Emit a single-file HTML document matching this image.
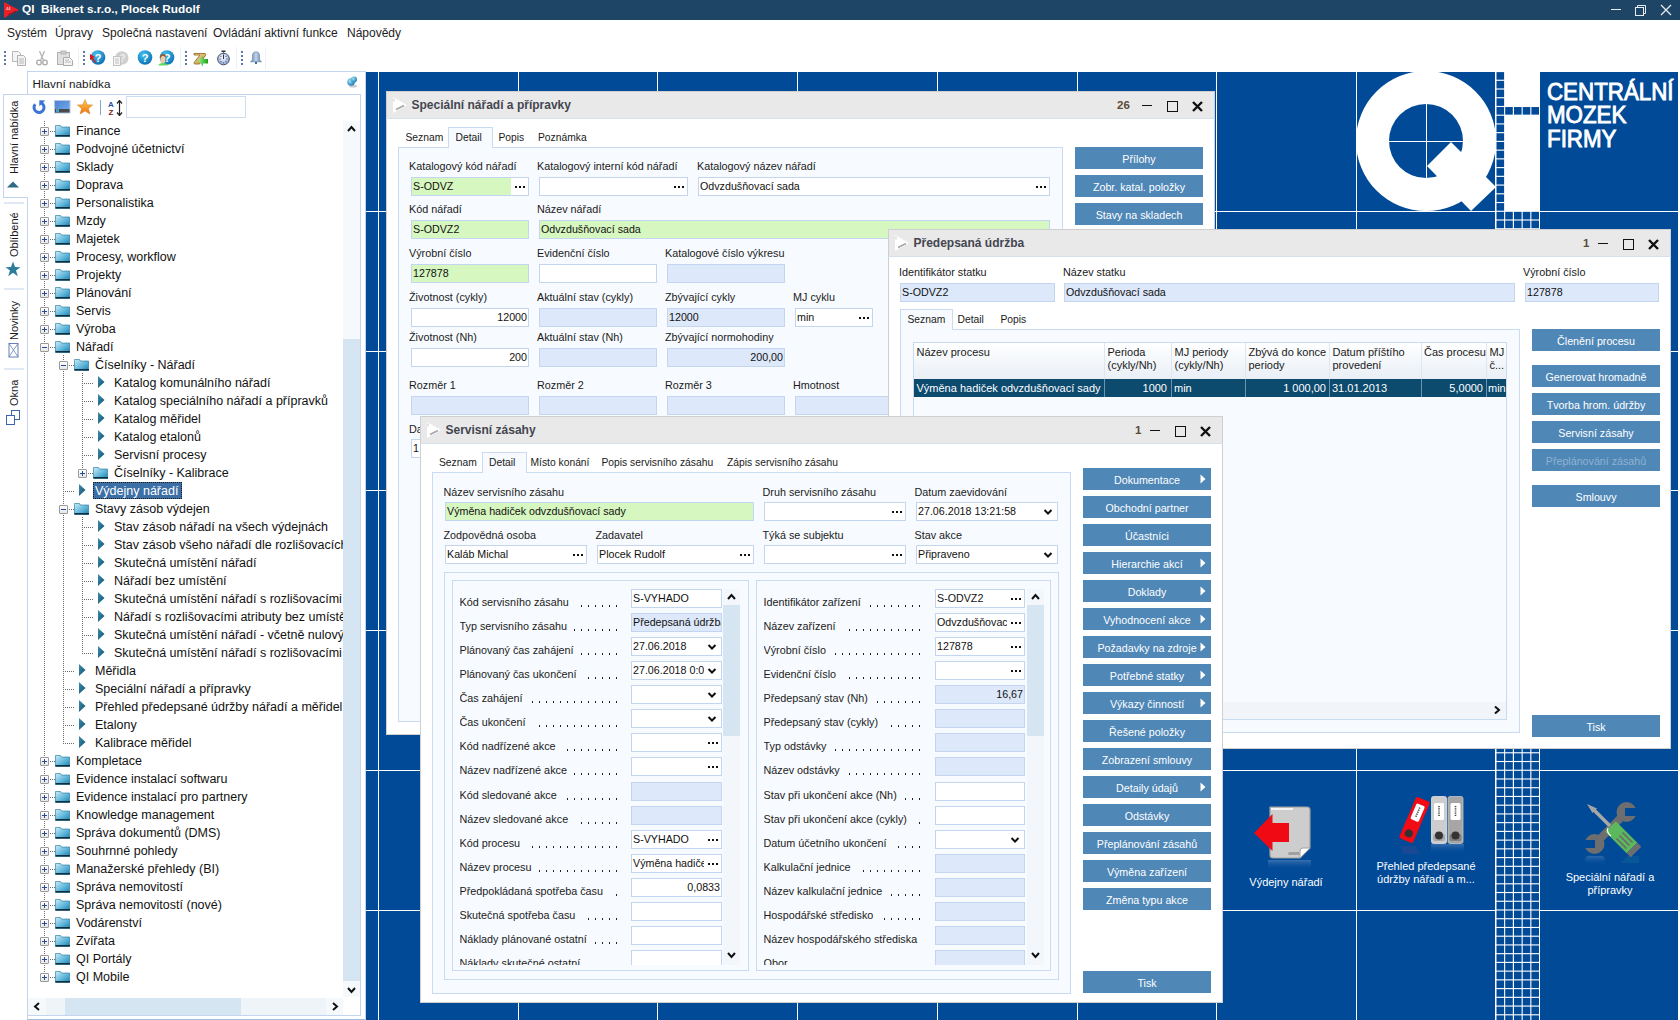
<!DOCTYPE html>
<html><head><meta charset="utf-8"><style>
html,body{margin:0;padding:0}
body{width:1680px;height:1020px;position:relative;overflow:hidden;background:#fff;font-family:"Liberation Sans",sans-serif}
body div{position:absolute;box-sizing:border-box}
.t{white-space:pre;line-height:1}
</style></head><body>
<div style="left:0px;top:0px;width:1680px;height:20px;background:#1e4565"></div>
<svg style="position:absolute;left:2px;top:1px;" width="18" height="18" viewBox="0 0 18 18"><polygon points="2,1 17,9 2,17" fill="#e8202a"/><line x1="6" y1="14" x2="14" y2="10" stroke="#a01018" stroke-width="1.2"/><text x="4" y="9" font-size="4" fill="#fff">44</text></svg>
<div class="t" style="left:22px;top:4.01px;font-size:11.8px;color:#fff;font-weight:700;">QI  Bikenet s.r.o., Plocek Rudolf</div>
<div style="left:1611px;top:9px;width:10px;height:1px;background:#e6ecf2"></div>
<svg style="position:absolute;left:1634px;top:4px;" width="14" height="13" viewBox="0 0 14 13"><rect x="1.5" y="3.5" width="8" height="8" fill="none" stroke="#e6ecf2"/><path d="M3.5 3.5V1.5h8v8h-2" fill="none" stroke="#e6ecf2"/></svg>
<svg style="position:absolute;left:1660px;top:4px;" width="12" height="12" viewBox="0 0 12 12"><path d="M1 1L11 11M11 1L1 11" stroke="#e6ecf2" stroke-width="1.3"/></svg>
<div class="t" style="left:7px;top:26.84px;font-size:12px;color:#1c1c1c;font-weight:400;">Systém</div>
<div class="t" style="left:55px;top:26.84px;font-size:12px;color:#1c1c1c;font-weight:400;">Úpravy</div>
<div class="t" style="left:102px;top:26.84px;font-size:12px;color:#1c1c1c;font-weight:400;">Společná nastavení</div>
<div class="t" style="left:213px;top:26.84px;font-size:12px;color:#1c1c1c;font-weight:400;">Ovládání aktivní funkce</div>
<div class="t" style="left:347px;top:26.84px;font-size:12px;color:#1c1c1c;font-weight:400;">Nápovědy</div>
<div style="left:4px;top:51px;width:2px;height:2px;background:#5a78a8"></div>
<div style="left:4px;top:55px;width:2px;height:2px;background:#5a78a8"></div>
<div style="left:4px;top:59px;width:2px;height:2px;background:#5a78a8"></div>
<div style="left:4px;top:63px;width:2px;height:2px;background:#5a78a8"></div>
<div style="left:83px;top:51px;width:2px;height:2px;background:#5a78a8"></div>
<div style="left:83px;top:55px;width:2px;height:2px;background:#5a78a8"></div>
<div style="left:83px;top:59px;width:2px;height:2px;background:#5a78a8"></div>
<div style="left:83px;top:63px;width:2px;height:2px;background:#5a78a8"></div>
<div style="left:185px;top:51px;width:2px;height:2px;background:#5a78a8"></div>
<div style="left:185px;top:55px;width:2px;height:2px;background:#5a78a8"></div>
<div style="left:185px;top:59px;width:2px;height:2px;background:#5a78a8"></div>
<div style="left:185px;top:63px;width:2px;height:2px;background:#5a78a8"></div>
<div style="left:241px;top:51px;width:2px;height:2px;background:#5a78a8"></div>
<div style="left:241px;top:55px;width:2px;height:2px;background:#5a78a8"></div>
<div style="left:241px;top:59px;width:2px;height:2px;background:#5a78a8"></div>
<div style="left:241px;top:63px;width:2px;height:2px;background:#5a78a8"></div>
<div style="left:78px;top:47px;width:1px;height:22px;background:#edf2f8"></div>
<div style="left:180px;top:47px;width:1px;height:22px;background:#edf2f8"></div>
<div style="left:236px;top:47px;width:1px;height:22px;background:#edf2f8"></div>
<div style="left:265px;top:47px;width:1px;height:22px;background:#edf2f8"></div>
<svg style="position:absolute;left:11px;top:50px;" width="16" height="16" viewBox="0 0 16 16"><path d="M1.5 1.5h6l2 2v8h-8z" fill="#f4f4f4" stroke="#b8b8b8"/><path d="M6.5 5.5h6l2 2v8h-8z" fill="#f4f4f4" stroke="#b0b0b0"/><path d="M8 9h5M8 11h5M8 13h5" stroke="#b8b8b8"/></svg>
<svg style="position:absolute;left:36px;top:50px;" width="12" height="16" viewBox="0 0 12 16"><circle cx="3" cy="12.5" r="2.3" fill="none" stroke="#aaa" stroke-width="1.3"/><circle cx="9" cy="12.5" r="2.3" fill="none" stroke="#aaa" stroke-width="1.3"/><path d="M3.5 1L7.5 10.5M8.5 1L4.5 10.5" stroke="#b5b5b5" stroke-width="1.3"/></svg>
<svg style="position:absolute;left:57px;top:50px;" width="17" height="16" viewBox="0 0 17 16"><rect x="0.5" y="2.5" width="12" height="12" fill="#e0e0e0" stroke="#b0b0b0"/><rect x="4" y="1" width="5" height="3" fill="#d0d0d0" stroke="#aaa" stroke-width=".8"/><path d="M6.5 7.5h6l3 3v5h-9z" fill="#f3f3f3" stroke="#aaa"/><path d="M8 10h4M8 12h6" stroke="#bbb"/></svg>
<svg style="position:absolute;left:89px;top:49px;" width="17" height="17" viewBox="0 0 17 17"><defs><radialGradient id="g89" cx="40%" cy="30%" r="70%"><stop offset="0" stop-color="#4fc6ef"/><stop offset="1" stop-color="#0a6fb2"/></radialGradient></defs><circle cx="9" cy="8.5" r="7.3" fill="url(#g89)"/><text x="9" y="12.6" font-size="11" font-weight="700" fill="#fff" text-anchor="middle" font-family="Liberation Sans">?</text><path d="M1 5l5 3-2 1 3 4-1 1-3-4-2 1z" fill="#e21818"/></svg>
<svg style="position:absolute;left:112px;top:49px;" width="18" height="18" viewBox="0 0 18 18"><circle cx="9.8" cy="9" r="6.8" fill="#cfcfcf"/><text x="10.5" y="13" font-size="10" font-weight="700" fill="#eee" text-anchor="middle" font-family="Liberation Sans">?</text><rect x="1.5" y="7.5" width="7" height="9" fill="#f4f4f4" stroke="#c4c4c4"/><path d="M3 10h4M3 12h4M3 14h4" stroke="#c4c4c4"/></svg>
<svg style="position:absolute;left:136px;top:49px;" width="17" height="17" viewBox="0 0 17 17"><defs><radialGradient id="g136" cx="40%" cy="30%" r="70%"><stop offset="0" stop-color="#45c2f0"/><stop offset="1" stop-color="#0b74b8"/></radialGradient></defs><circle cx="9" cy="8.5" r="7.3" fill="url(#g136)"/><text x="9" y="12.6" font-size="11" font-weight="700" fill="#fff" text-anchor="middle" font-family="Liberation Sans">?</text></svg>
<svg style="position:absolute;left:158px;top:49px;" width="17" height="17" viewBox="0 0 17 17"><defs><radialGradient id="g158" cx="40%" cy="30%" r="70%"><stop offset="0" stop-color="#45c2f0"/><stop offset="1" stop-color="#0b74b8"/></radialGradient></defs><circle cx="9" cy="8.5" r="7.3" fill="url(#g158)"/><text x="9" y="12.6" font-size="11" font-weight="700" fill="#fff" text-anchor="middle" font-family="Liberation Sans">?</text><rect x="2.6" y="7" width="4.6" height="7" rx="1.5" fill="#f2c9a2"/><path d="M2 9q0-4 3-4t3 3l-1 0q-1-1.5-2-1.5t-2 2z" fill="#a0521e"/><path d="M0.5 16.5q0-2.5 4.5-2.5t4.5 2.5z" fill="#5fdc5f"/></svg>
<svg style="position:absolute;left:192px;top:51px;" width="17" height="16" viewBox="0 0 17 16"><defs><linearGradient id="scr" x1="0" y1="0" x2="1" y2="1"><stop offset="0" stop-color="#f4e3a8"/><stop offset="1" stop-color="#b88a30"/></linearGradient><linearGradient id="gar" x1="0" y1="0" x2="1" y2="0"><stop offset="0" stop-color="#9cf08c"/><stop offset="1" stop-color="#18a018"/></linearGradient></defs><path d="M2 2.5h11q1.5 0.5 0.5 2l-6 8.5h-5q-1-0.5 0-2l5.5-7h-6z" fill="url(#scr)" stroke="#9a7128" stroke-width=".9"/><polygon points="6,9.5 11,5 11,8 16,8 16,12.5 11,12.5 11,15.5" fill="url(#gar)"/></svg>
<svg style="position:absolute;left:216px;top:50px;" width="15" height="16" viewBox="0 0 15 16"><defs><radialGradient id="sw" cx="45%" cy="35%" r="70%"><stop offset="0" stop-color="#ffffff"/><stop offset="1" stop-color="#8aa6dc"/></radialGradient></defs><rect x="5.5" y="0.5" width="4" height="1.5" fill="#333"/><path d="M7.5 2v2" stroke="#777"/><circle cx="7.5" cy="9" r="5.8" fill="url(#sw)" stroke="#3c4a66" stroke-width="1"/><path d="M7.5 9V4.5" stroke="#333" stroke-width="1"/><g fill="#4a3a6a"><circle cx="7.5" cy="12.8" r=".6"/><circle cx="4" cy="9" r=".6"/><circle cx="11" cy="9" r=".6"/><circle cx="5" cy="6.3" r=".6"/><circle cx="10" cy="6.3" r=".6"/><circle cx="5" cy="11.7" r=".6"/><circle cx="10" cy="11.7" r=".6"/></g></svg>
<svg style="position:absolute;left:250px;top:51px;" width="12" height="14" viewBox="0 0 12 14"><defs><linearGradient id="bl" x1="0" y1="0" x2="1" y2="0"><stop offset="0" stop-color="#5c7eac"/><stop offset=".5" stop-color="#c3d3e8"/><stop offset="1" stop-color="#5c7eac"/></linearGradient></defs><path d="M6 0.8q-3.6 0-3.6 4.5v3.7l-1.9 1.8h11l-1.9-1.8v-3.7q0-4.5-3.6-4.5z" fill="url(#bl)" stroke="#5a7aa6" stroke-width=".6"/><rect x="5" y="10.8" width="2" height="2.2" fill="#4a6a98"/></svg>
<div style="left:27px;top:197px;width:1px;height:823px;background:#c3d4ee"></div>
<div style="left:3px;top:94px;width:25px;height:104px;background:#fff;border:1px solid #c3d4ee;border-right:none"></div>
<div class="t" style="left:9.19px;top:174px;font-size:11px;color:#1a1a1a;transform-origin:0 0;transform:rotate(-90deg)">Hlavní nabídka</div>
<svg style="position:absolute;left:6px;top:181px;" width="14" height="7" viewBox="0 0 14 7"><polygon points="1,6.5 7,0.5 13,6.5" fill="#2d6b86"/></svg>
<div style="left:4px;top:202px;width:20px;height:2px;background:#dfe8f5"></div>
<div style="left:4px;top:288px;width:20px;height:2px;background:#dfe8f5"></div>
<div style="left:4px;top:368px;width:20px;height:2px;background:#dfe8f5"></div>
<div class="t" style="left:9.19px;top:257px;font-size:11px;color:#1a1a1a;transform-origin:0 0;transform:rotate(-90deg)">Oblíbené</div>
<svg style="position:absolute;left:5px;top:261px;" width="16" height="16" viewBox="0 0 16 16"><polygon points="8,0.5 10,6 15.5,6.2 11,9.6 12.8,15.2 8,11.8 3.2,15.2 5,9.6 0.5,6.2 6,6" fill="#2e7c9c"/></svg>
<div class="t" style="left:9.19px;top:340px;font-size:11px;color:#1a1a1a;transform-origin:0 0;transform:rotate(-90deg)">Novinky</div>
<svg style="position:absolute;left:8px;top:343px;" width="11" height="15" viewBox="0 0 11 15"><rect x="1" y="0.5" width="9" height="13.5" fill="#fff" stroke="#6680b8"/><path d="M1 0.5L5.5 7L10 0.5M1 14L5.5 7L10 14" fill="none" stroke="#6680b8" stroke-width=".8"/></svg>
<div class="t" style="left:9.19px;top:406px;font-size:11px;color:#1a1a1a;transform-origin:0 0;transform:rotate(-90deg)">Okna</div>
<svg style="position:absolute;left:6px;top:410px;" width="14" height="15" viewBox="0 0 14 15"><rect x="5.5" y="0.5" width="8" height="9" fill="#fff" stroke="#3d63b0"/><rect x="0.5" y="5.5" width="8" height="9" fill="#fff" stroke="#3d63b0"/></svg>
<div style="left:27px;top:71px;width:339px;height:24px;background:#fff;border:1px solid #c3d4ee;border-bottom:none"></div>
<div class="t" style="left:32.5px;top:78.10px;font-size:11.7px;color:#1a1a1a;font-weight:400;">Hlavní nabídka</div>
<svg style="position:absolute;left:345px;top:75px;" width="14" height="14" viewBox="0 0 14 14"><defs><radialGradient id="pin" cx="35%" cy="35%" r="70%"><stop offset="0" stop-color="#9fe0f5"/><stop offset="1" stop-color="#1e7db5"/></radialGradient></defs><ellipse cx="8" cy="11" rx="4" ry="1.6" fill="#999" opacity=".5"/><circle cx="6" cy="7" r="3.8" fill="url(#pin)"/><circle cx="9" cy="4.5" r="3" fill="url(#pin)"/></svg>
<div style="left:27px;top:94px;width:334px;height:922px;background:#fff;border:1px solid #c3d4ee"></div>
<div style="left:27px;top:1019px;width:338px;height:1px;background:#9fbfdc"></div>
<div style="left:365px;top:71px;width:1px;height:949px;background:#c3d4ee"></div>
<div style="left:27px;top:95px;width:1px;height:102px;background:#fff"></div>
<svg style="position:absolute;left:32px;top:100px;" width="15" height="15" viewBox="0 0 15 15"><path d="M3.2 4.3A5 5 0 1 0 8 2.6" fill="none" stroke="#3d74d8" stroke-width="3"/><polygon points="7.3,0.2 13.3,0.6 7.3,6.2" fill="#3d74d8"/></svg>
<svg style="position:absolute;left:54px;top:100px;" width="17" height="14" viewBox="0 0 17 14"><defs><linearGradient id="mon" x1="0" y1="0" x2="1" y2="1"><stop offset="0" stop-color="#4e80cf"/><stop offset="1" stop-color="#74aef0"/></linearGradient></defs><rect x="0.5" y="0.5" width="15.5" height="12.5" fill="url(#mon)" stroke="#b7c8de"/><rect x="1" y="9" width="14.5" height="3.5" fill="#4a4a4a"/><rect x="2" y="8.5" width="3" height="3.5" fill="#3aa0e0"/><rect x="2.5" y="9" width="1" height="1" fill="#e44"/><rect x="3.5" y="9" width="1" height="1" fill="#4c4"/></svg>
<svg style="position:absolute;left:77px;top:99px;" width="16" height="16" viewBox="0 0 16 16"><defs><linearGradient id="st" x1="0" y1="0" x2="0" y2="1"><stop offset="0" stop-color="#ffd04a"/><stop offset="1" stop-color="#f07010"/></linearGradient></defs><polygon points="8,0.5 10.2,5.8 15.6,6 11.4,9.5 12.9,15 8,11.9 3.1,15 4.6,9.5 0.4,6 5.8,5.8" fill="url(#st)" stroke="#c87a20" stroke-width=".5"/></svg>
<div style="left:100px;top:100px;width:1px;height:15px;background:#7fa9cf"></div>
<svg style="position:absolute;left:108px;top:100px;" width="15" height="16" viewBox="0 0 15 16"><text x="0" y="7" font-size="8" font-weight="700" fill="#2850a0" font-family="Liberation Sans">A</text><text x="0.5" y="15" font-size="8" font-weight="700" fill="#7a1a1a" font-family="Liberation Sans">Z</text><path d="M11.5 1v14" stroke="#222" stroke-width="1.2"/><path d="M9 3.5l2.5-3 2.5 3M9 12.5l2.5 3 2.5-3" fill="none" stroke="#222" stroke-width="1.2"/></svg>
<div style="left:126px;top:96px;width:120px;height:22px;background:#fff;border:1px solid #cddcf0"></div>
<div style="left:28px;top:120px;width:315px;height:876px;overflow:hidden;">
<div style="left:16px;top:1px;width:1px;height:855px;background:repeating-linear-gradient(to bottom,#6a6a6a 0 1px,transparent 1px 2px)"></div>
<div style="left:35px;top:235px;width:1px;height:388px;background:repeating-linear-gradient(to bottom,#6a6a6a 0 1px,transparent 1px 2px)"></div>
<div style="left:54px;top:253px;width:1px;height:99px;background:repeating-linear-gradient(to bottom,#6a6a6a 0 1px,transparent 1px 2px)"></div>
<div style="left:54px;top:397px;width:1px;height:136px;background:repeating-linear-gradient(to bottom,#6a6a6a 0 1px,transparent 1px 2px)"></div>
<div style="left:20px;top:11px;width:7px;height:1px;background:repeating-linear-gradient(to right,#6a6a6a 0 1px,transparent 1px 2px)"></div>
<div style="left:12px;top:7px;width:9px;height:9px;background:linear-gradient(#fff,#e6e6e6);border:1px solid #9a9a9a;border-radius:1px"></div>
<div style="left:14px;top:11px;width:5px;height:1px;background:#2848a0"></div>
<div style="left:16px;top:9px;width:1px;height:5px;background:#2848a0"></div>
<svg style="position:absolute;left:27px;top:4px;" width="16" height="13" viewBox="0 0 16 13"><defs><linearGradient id="fd" x1="0" y1="0" x2="1" y2="1"><stop offset="0" stop-color="#c9ecf8"/><stop offset=".6" stop-color="#59b2d8"/><stop offset="1" stop-color="#1d7ea8"/></linearGradient></defs><path d="M0.5 1.5h5l1 1.5h8v9.5h-14z" fill="url(#fd)" stroke="#1b6f94" stroke-width=".6"/><rect x="0.5" y="11" width="14.5" height="1.5" fill="#0f2f40"/></svg>
<div class="t" style="left:48px;top:4.72px;font-size:12.5px;color:#111;font-weight:400;">Finance</div>
<div style="left:20px;top:29px;width:7px;height:1px;background:repeating-linear-gradient(to right,#6a6a6a 0 1px,transparent 1px 2px)"></div>
<div style="left:12px;top:25px;width:9px;height:9px;background:linear-gradient(#fff,#e6e6e6);border:1px solid #9a9a9a;border-radius:1px"></div>
<div style="left:14px;top:29px;width:5px;height:1px;background:#2848a0"></div>
<div style="left:16px;top:27px;width:1px;height:5px;background:#2848a0"></div>
<svg style="position:absolute;left:27px;top:22px;" width="16" height="13" viewBox="0 0 16 13"><defs><linearGradient id="fd" x1="0" y1="0" x2="1" y2="1"><stop offset="0" stop-color="#c9ecf8"/><stop offset=".6" stop-color="#59b2d8"/><stop offset="1" stop-color="#1d7ea8"/></linearGradient></defs><path d="M0.5 1.5h5l1 1.5h8v9.5h-14z" fill="url(#fd)" stroke="#1b6f94" stroke-width=".6"/><rect x="0.5" y="11" width="14.5" height="1.5" fill="#0f2f40"/></svg>
<div class="t" style="left:48px;top:22.72px;font-size:12.5px;color:#111;font-weight:400;">Podvojné účetnictví</div>
<div style="left:20px;top:47px;width:7px;height:1px;background:repeating-linear-gradient(to right,#6a6a6a 0 1px,transparent 1px 2px)"></div>
<div style="left:12px;top:43px;width:9px;height:9px;background:linear-gradient(#fff,#e6e6e6);border:1px solid #9a9a9a;border-radius:1px"></div>
<div style="left:14px;top:47px;width:5px;height:1px;background:#2848a0"></div>
<div style="left:16px;top:45px;width:1px;height:5px;background:#2848a0"></div>
<svg style="position:absolute;left:27px;top:40px;" width="16" height="13" viewBox="0 0 16 13"><defs><linearGradient id="fd" x1="0" y1="0" x2="1" y2="1"><stop offset="0" stop-color="#c9ecf8"/><stop offset=".6" stop-color="#59b2d8"/><stop offset="1" stop-color="#1d7ea8"/></linearGradient></defs><path d="M0.5 1.5h5l1 1.5h8v9.5h-14z" fill="url(#fd)" stroke="#1b6f94" stroke-width=".6"/><rect x="0.5" y="11" width="14.5" height="1.5" fill="#0f2f40"/></svg>
<div class="t" style="left:48px;top:40.72px;font-size:12.5px;color:#111;font-weight:400;">Sklady</div>
<div style="left:20px;top:65px;width:7px;height:1px;background:repeating-linear-gradient(to right,#6a6a6a 0 1px,transparent 1px 2px)"></div>
<div style="left:12px;top:61px;width:9px;height:9px;background:linear-gradient(#fff,#e6e6e6);border:1px solid #9a9a9a;border-radius:1px"></div>
<div style="left:14px;top:65px;width:5px;height:1px;background:#2848a0"></div>
<div style="left:16px;top:63px;width:1px;height:5px;background:#2848a0"></div>
<svg style="position:absolute;left:27px;top:58px;" width="16" height="13" viewBox="0 0 16 13"><defs><linearGradient id="fd" x1="0" y1="0" x2="1" y2="1"><stop offset="0" stop-color="#c9ecf8"/><stop offset=".6" stop-color="#59b2d8"/><stop offset="1" stop-color="#1d7ea8"/></linearGradient></defs><path d="M0.5 1.5h5l1 1.5h8v9.5h-14z" fill="url(#fd)" stroke="#1b6f94" stroke-width=".6"/><rect x="0.5" y="11" width="14.5" height="1.5" fill="#0f2f40"/></svg>
<div class="t" style="left:48px;top:58.72px;font-size:12.5px;color:#111;font-weight:400;">Doprava</div>
<div style="left:20px;top:83px;width:7px;height:1px;background:repeating-linear-gradient(to right,#6a6a6a 0 1px,transparent 1px 2px)"></div>
<div style="left:12px;top:79px;width:9px;height:9px;background:linear-gradient(#fff,#e6e6e6);border:1px solid #9a9a9a;border-radius:1px"></div>
<div style="left:14px;top:83px;width:5px;height:1px;background:#2848a0"></div>
<div style="left:16px;top:81px;width:1px;height:5px;background:#2848a0"></div>
<svg style="position:absolute;left:27px;top:76px;" width="16" height="13" viewBox="0 0 16 13"><defs><linearGradient id="fd" x1="0" y1="0" x2="1" y2="1"><stop offset="0" stop-color="#c9ecf8"/><stop offset=".6" stop-color="#59b2d8"/><stop offset="1" stop-color="#1d7ea8"/></linearGradient></defs><path d="M0.5 1.5h5l1 1.5h8v9.5h-14z" fill="url(#fd)" stroke="#1b6f94" stroke-width=".6"/><rect x="0.5" y="11" width="14.5" height="1.5" fill="#0f2f40"/></svg>
<div class="t" style="left:48px;top:76.72px;font-size:12.5px;color:#111;font-weight:400;">Personalistika</div>
<div style="left:20px;top:101px;width:7px;height:1px;background:repeating-linear-gradient(to right,#6a6a6a 0 1px,transparent 1px 2px)"></div>
<div style="left:12px;top:97px;width:9px;height:9px;background:linear-gradient(#fff,#e6e6e6);border:1px solid #9a9a9a;border-radius:1px"></div>
<div style="left:14px;top:101px;width:5px;height:1px;background:#2848a0"></div>
<div style="left:16px;top:99px;width:1px;height:5px;background:#2848a0"></div>
<svg style="position:absolute;left:27px;top:94px;" width="16" height="13" viewBox="0 0 16 13"><defs><linearGradient id="fd" x1="0" y1="0" x2="1" y2="1"><stop offset="0" stop-color="#c9ecf8"/><stop offset=".6" stop-color="#59b2d8"/><stop offset="1" stop-color="#1d7ea8"/></linearGradient></defs><path d="M0.5 1.5h5l1 1.5h8v9.5h-14z" fill="url(#fd)" stroke="#1b6f94" stroke-width=".6"/><rect x="0.5" y="11" width="14.5" height="1.5" fill="#0f2f40"/></svg>
<div class="t" style="left:48px;top:94.72px;font-size:12.5px;color:#111;font-weight:400;">Mzdy</div>
<div style="left:20px;top:119px;width:7px;height:1px;background:repeating-linear-gradient(to right,#6a6a6a 0 1px,transparent 1px 2px)"></div>
<div style="left:12px;top:115px;width:9px;height:9px;background:linear-gradient(#fff,#e6e6e6);border:1px solid #9a9a9a;border-radius:1px"></div>
<div style="left:14px;top:119px;width:5px;height:1px;background:#2848a0"></div>
<div style="left:16px;top:117px;width:1px;height:5px;background:#2848a0"></div>
<svg style="position:absolute;left:27px;top:112px;" width="16" height="13" viewBox="0 0 16 13"><defs><linearGradient id="fd" x1="0" y1="0" x2="1" y2="1"><stop offset="0" stop-color="#c9ecf8"/><stop offset=".6" stop-color="#59b2d8"/><stop offset="1" stop-color="#1d7ea8"/></linearGradient></defs><path d="M0.5 1.5h5l1 1.5h8v9.5h-14z" fill="url(#fd)" stroke="#1b6f94" stroke-width=".6"/><rect x="0.5" y="11" width="14.5" height="1.5" fill="#0f2f40"/></svg>
<div class="t" style="left:48px;top:112.72px;font-size:12.5px;color:#111;font-weight:400;">Majetek</div>
<div style="left:20px;top:137px;width:7px;height:1px;background:repeating-linear-gradient(to right,#6a6a6a 0 1px,transparent 1px 2px)"></div>
<div style="left:12px;top:133px;width:9px;height:9px;background:linear-gradient(#fff,#e6e6e6);border:1px solid #9a9a9a;border-radius:1px"></div>
<div style="left:14px;top:137px;width:5px;height:1px;background:#2848a0"></div>
<div style="left:16px;top:135px;width:1px;height:5px;background:#2848a0"></div>
<svg style="position:absolute;left:27px;top:130px;" width="16" height="13" viewBox="0 0 16 13"><defs><linearGradient id="fd" x1="0" y1="0" x2="1" y2="1"><stop offset="0" stop-color="#c9ecf8"/><stop offset=".6" stop-color="#59b2d8"/><stop offset="1" stop-color="#1d7ea8"/></linearGradient></defs><path d="M0.5 1.5h5l1 1.5h8v9.5h-14z" fill="url(#fd)" stroke="#1b6f94" stroke-width=".6"/><rect x="0.5" y="11" width="14.5" height="1.5" fill="#0f2f40"/></svg>
<div class="t" style="left:48px;top:130.72px;font-size:12.5px;color:#111;font-weight:400;">Procesy, workflow</div>
<div style="left:20px;top:155px;width:7px;height:1px;background:repeating-linear-gradient(to right,#6a6a6a 0 1px,transparent 1px 2px)"></div>
<div style="left:12px;top:151px;width:9px;height:9px;background:linear-gradient(#fff,#e6e6e6);border:1px solid #9a9a9a;border-radius:1px"></div>
<div style="left:14px;top:155px;width:5px;height:1px;background:#2848a0"></div>
<div style="left:16px;top:153px;width:1px;height:5px;background:#2848a0"></div>
<svg style="position:absolute;left:27px;top:148px;" width="16" height="13" viewBox="0 0 16 13"><defs><linearGradient id="fd" x1="0" y1="0" x2="1" y2="1"><stop offset="0" stop-color="#c9ecf8"/><stop offset=".6" stop-color="#59b2d8"/><stop offset="1" stop-color="#1d7ea8"/></linearGradient></defs><path d="M0.5 1.5h5l1 1.5h8v9.5h-14z" fill="url(#fd)" stroke="#1b6f94" stroke-width=".6"/><rect x="0.5" y="11" width="14.5" height="1.5" fill="#0f2f40"/></svg>
<div class="t" style="left:48px;top:148.72px;font-size:12.5px;color:#111;font-weight:400;">Projekty</div>
<div style="left:20px;top:173px;width:7px;height:1px;background:repeating-linear-gradient(to right,#6a6a6a 0 1px,transparent 1px 2px)"></div>
<div style="left:12px;top:169px;width:9px;height:9px;background:linear-gradient(#fff,#e6e6e6);border:1px solid #9a9a9a;border-radius:1px"></div>
<div style="left:14px;top:173px;width:5px;height:1px;background:#2848a0"></div>
<div style="left:16px;top:171px;width:1px;height:5px;background:#2848a0"></div>
<svg style="position:absolute;left:27px;top:166px;" width="16" height="13" viewBox="0 0 16 13"><defs><linearGradient id="fd" x1="0" y1="0" x2="1" y2="1"><stop offset="0" stop-color="#c9ecf8"/><stop offset=".6" stop-color="#59b2d8"/><stop offset="1" stop-color="#1d7ea8"/></linearGradient></defs><path d="M0.5 1.5h5l1 1.5h8v9.5h-14z" fill="url(#fd)" stroke="#1b6f94" stroke-width=".6"/><rect x="0.5" y="11" width="14.5" height="1.5" fill="#0f2f40"/></svg>
<div class="t" style="left:48px;top:166.72px;font-size:12.5px;color:#111;font-weight:400;">Plánování</div>
<div style="left:20px;top:191px;width:7px;height:1px;background:repeating-linear-gradient(to right,#6a6a6a 0 1px,transparent 1px 2px)"></div>
<div style="left:12px;top:187px;width:9px;height:9px;background:linear-gradient(#fff,#e6e6e6);border:1px solid #9a9a9a;border-radius:1px"></div>
<div style="left:14px;top:191px;width:5px;height:1px;background:#2848a0"></div>
<div style="left:16px;top:189px;width:1px;height:5px;background:#2848a0"></div>
<svg style="position:absolute;left:27px;top:184px;" width="16" height="13" viewBox="0 0 16 13"><defs><linearGradient id="fd" x1="0" y1="0" x2="1" y2="1"><stop offset="0" stop-color="#c9ecf8"/><stop offset=".6" stop-color="#59b2d8"/><stop offset="1" stop-color="#1d7ea8"/></linearGradient></defs><path d="M0.5 1.5h5l1 1.5h8v9.5h-14z" fill="url(#fd)" stroke="#1b6f94" stroke-width=".6"/><rect x="0.5" y="11" width="14.5" height="1.5" fill="#0f2f40"/></svg>
<div class="t" style="left:48px;top:184.72px;font-size:12.5px;color:#111;font-weight:400;">Servis</div>
<div style="left:20px;top:209px;width:7px;height:1px;background:repeating-linear-gradient(to right,#6a6a6a 0 1px,transparent 1px 2px)"></div>
<div style="left:12px;top:205px;width:9px;height:9px;background:linear-gradient(#fff,#e6e6e6);border:1px solid #9a9a9a;border-radius:1px"></div>
<div style="left:14px;top:209px;width:5px;height:1px;background:#2848a0"></div>
<div style="left:16px;top:207px;width:1px;height:5px;background:#2848a0"></div>
<svg style="position:absolute;left:27px;top:202px;" width="16" height="13" viewBox="0 0 16 13"><defs><linearGradient id="fd" x1="0" y1="0" x2="1" y2="1"><stop offset="0" stop-color="#c9ecf8"/><stop offset=".6" stop-color="#59b2d8"/><stop offset="1" stop-color="#1d7ea8"/></linearGradient></defs><path d="M0.5 1.5h5l1 1.5h8v9.5h-14z" fill="url(#fd)" stroke="#1b6f94" stroke-width=".6"/><rect x="0.5" y="11" width="14.5" height="1.5" fill="#0f2f40"/></svg>
<div class="t" style="left:48px;top:202.72px;font-size:12.5px;color:#111;font-weight:400;">Výroba</div>
<div style="left:20px;top:227px;width:7px;height:1px;background:repeating-linear-gradient(to right,#6a6a6a 0 1px,transparent 1px 2px)"></div>
<div style="left:12px;top:223px;width:9px;height:9px;background:linear-gradient(#fff,#e6e6e6);border:1px solid #9a9a9a;border-radius:1px"></div>
<div style="left:14px;top:227px;width:5px;height:1px;background:#2848a0"></div>
<svg style="position:absolute;left:27px;top:220px;" width="16" height="13" viewBox="0 0 16 13"><defs><linearGradient id="fd" x1="0" y1="0" x2="1" y2="1"><stop offset="0" stop-color="#c9ecf8"/><stop offset=".6" stop-color="#59b2d8"/><stop offset="1" stop-color="#1d7ea8"/></linearGradient></defs><path d="M0.5 1.5h5l1 1.5h8v9.5h-14z" fill="url(#fd)" stroke="#1b6f94" stroke-width=".6"/><rect x="0.5" y="11" width="14.5" height="1.5" fill="#0f2f40"/></svg>
<div class="t" style="left:48px;top:220.72px;font-size:12.5px;color:#111;font-weight:400;">Nářadí</div>
<div style="left:39px;top:245px;width:7px;height:1px;background:repeating-linear-gradient(to right,#6a6a6a 0 1px,transparent 1px 2px)"></div>
<div style="left:31px;top:241px;width:9px;height:9px;background:linear-gradient(#fff,#e6e6e6);border:1px solid #9a9a9a;border-radius:1px"></div>
<div style="left:33px;top:245px;width:5px;height:1px;background:#2848a0"></div>
<svg style="position:absolute;left:46px;top:238px;" width="16" height="13" viewBox="0 0 16 13"><defs><linearGradient id="fd" x1="0" y1="0" x2="1" y2="1"><stop offset="0" stop-color="#c9ecf8"/><stop offset=".6" stop-color="#59b2d8"/><stop offset="1" stop-color="#1d7ea8"/></linearGradient></defs><path d="M0.5 1.5h5l1 1.5h8v9.5h-14z" fill="url(#fd)" stroke="#1b6f94" stroke-width=".6"/><rect x="0.5" y="11" width="14.5" height="1.5" fill="#0f2f40"/></svg>
<div class="t" style="left:67px;top:238.72px;font-size:12.5px;color:#111;font-weight:400;">Číselníky - Nářadí</div>
<div style="left:54px;top:263px;width:11px;height:1px;background:repeating-linear-gradient(to right,#6a6a6a 0 1px,transparent 1px 2px)"></div>
<svg style="position:absolute;left:70px;top:256px;" width="7" height="12" viewBox="0 0 7 12"><defs><linearGradient id="ag" x1="0" y1="0" x2="1" y2="1"><stop offset="0" stop-color="#3a8fb0"/><stop offset="1" stop-color="#14506a"/></linearGradient></defs><polygon points="0,0 6.5,6 0,12" fill="url(#ag)"/></svg>
<div class="t" style="left:86px;top:256.72px;font-size:12.5px;color:#111;font-weight:400;">Katalog komunálního nářadí</div>
<div style="left:54px;top:281px;width:11px;height:1px;background:repeating-linear-gradient(to right,#6a6a6a 0 1px,transparent 1px 2px)"></div>
<svg style="position:absolute;left:70px;top:274px;" width="7" height="12" viewBox="0 0 7 12"><defs><linearGradient id="ag" x1="0" y1="0" x2="1" y2="1"><stop offset="0" stop-color="#3a8fb0"/><stop offset="1" stop-color="#14506a"/></linearGradient></defs><polygon points="0,0 6.5,6 0,12" fill="url(#ag)"/></svg>
<div class="t" style="left:86px;top:274.72px;font-size:12.5px;color:#111;font-weight:400;">Katalog speciálního nářadí a přípravků</div>
<div style="left:54px;top:299px;width:11px;height:1px;background:repeating-linear-gradient(to right,#6a6a6a 0 1px,transparent 1px 2px)"></div>
<svg style="position:absolute;left:70px;top:292px;" width="7" height="12" viewBox="0 0 7 12"><defs><linearGradient id="ag" x1="0" y1="0" x2="1" y2="1"><stop offset="0" stop-color="#3a8fb0"/><stop offset="1" stop-color="#14506a"/></linearGradient></defs><polygon points="0,0 6.5,6 0,12" fill="url(#ag)"/></svg>
<div class="t" style="left:86px;top:292.72px;font-size:12.5px;color:#111;font-weight:400;">Katalog měřidel</div>
<div style="left:54px;top:317px;width:11px;height:1px;background:repeating-linear-gradient(to right,#6a6a6a 0 1px,transparent 1px 2px)"></div>
<svg style="position:absolute;left:70px;top:310px;" width="7" height="12" viewBox="0 0 7 12"><defs><linearGradient id="ag" x1="0" y1="0" x2="1" y2="1"><stop offset="0" stop-color="#3a8fb0"/><stop offset="1" stop-color="#14506a"/></linearGradient></defs><polygon points="0,0 6.5,6 0,12" fill="url(#ag)"/></svg>
<div class="t" style="left:86px;top:310.72px;font-size:12.5px;color:#111;font-weight:400;">Katalog etalonů</div>
<div style="left:54px;top:335px;width:11px;height:1px;background:repeating-linear-gradient(to right,#6a6a6a 0 1px,transparent 1px 2px)"></div>
<svg style="position:absolute;left:70px;top:328px;" width="7" height="12" viewBox="0 0 7 12"><defs><linearGradient id="ag" x1="0" y1="0" x2="1" y2="1"><stop offset="0" stop-color="#3a8fb0"/><stop offset="1" stop-color="#14506a"/></linearGradient></defs><polygon points="0,0 6.5,6 0,12" fill="url(#ag)"/></svg>
<div class="t" style="left:86px;top:328.72px;font-size:12.5px;color:#111;font-weight:400;">Servisní procesy</div>
<div style="left:58px;top:353px;width:7px;height:1px;background:repeating-linear-gradient(to right,#6a6a6a 0 1px,transparent 1px 2px)"></div>
<div style="left:50px;top:349px;width:9px;height:9px;background:linear-gradient(#fff,#e6e6e6);border:1px solid #9a9a9a;border-radius:1px"></div>
<div style="left:52px;top:353px;width:5px;height:1px;background:#2848a0"></div>
<div style="left:54px;top:351px;width:1px;height:5px;background:#2848a0"></div>
<svg style="position:absolute;left:65px;top:346px;" width="16" height="13" viewBox="0 0 16 13"><defs><linearGradient id="fd" x1="0" y1="0" x2="1" y2="1"><stop offset="0" stop-color="#c9ecf8"/><stop offset=".6" stop-color="#59b2d8"/><stop offset="1" stop-color="#1d7ea8"/></linearGradient></defs><path d="M0.5 1.5h5l1 1.5h8v9.5h-14z" fill="url(#fd)" stroke="#1b6f94" stroke-width=".6"/><rect x="0.5" y="11" width="14.5" height="1.5" fill="#0f2f40"/></svg>
<div class="t" style="left:86px;top:346.72px;font-size:12.5px;color:#111;font-weight:400;">Číselníky - Kalibrace</div>
<div style="left:35px;top:371px;width:11px;height:1px;background:repeating-linear-gradient(to right,#6a6a6a 0 1px,transparent 1px 2px)"></div>
<svg style="position:absolute;left:51px;top:364px;" width="7" height="12" viewBox="0 0 7 12"><defs><linearGradient id="ag" x1="0" y1="0" x2="1" y2="1"><stop offset="0" stop-color="#3a8fb0"/><stop offset="1" stop-color="#14506a"/></linearGradient></defs><polygon points="0,0 6.5,6 0,12" fill="url(#ag)"/></svg>
<div style="left:65px;top:362px;width:89px;height:17px;background:#3b6fa6;border:1px dotted #1a1a1a"></div>
<div class="t" style="left:67px;top:364.72px;font-size:12.5px;color:#fff;font-weight:400;">Výdejny nářadí</div>
<div style="left:39px;top:389px;width:7px;height:1px;background:repeating-linear-gradient(to right,#6a6a6a 0 1px,transparent 1px 2px)"></div>
<div style="left:31px;top:385px;width:9px;height:9px;background:linear-gradient(#fff,#e6e6e6);border:1px solid #9a9a9a;border-radius:1px"></div>
<div style="left:33px;top:389px;width:5px;height:1px;background:#2848a0"></div>
<svg style="position:absolute;left:46px;top:382px;" width="16" height="13" viewBox="0 0 16 13"><defs><linearGradient id="fd" x1="0" y1="0" x2="1" y2="1"><stop offset="0" stop-color="#c9ecf8"/><stop offset=".6" stop-color="#59b2d8"/><stop offset="1" stop-color="#1d7ea8"/></linearGradient></defs><path d="M0.5 1.5h5l1 1.5h8v9.5h-14z" fill="url(#fd)" stroke="#1b6f94" stroke-width=".6"/><rect x="0.5" y="11" width="14.5" height="1.5" fill="#0f2f40"/></svg>
<div class="t" style="left:67px;top:382.72px;font-size:12.5px;color:#111;font-weight:400;">Stavy zásob výdejen</div>
<div style="left:54px;top:407px;width:11px;height:1px;background:repeating-linear-gradient(to right,#6a6a6a 0 1px,transparent 1px 2px)"></div>
<svg style="position:absolute;left:70px;top:400px;" width="7" height="12" viewBox="0 0 7 12"><defs><linearGradient id="ag" x1="0" y1="0" x2="1" y2="1"><stop offset="0" stop-color="#3a8fb0"/><stop offset="1" stop-color="#14506a"/></linearGradient></defs><polygon points="0,0 6.5,6 0,12" fill="url(#ag)"/></svg>
<div class="t" style="left:86px;top:400.72px;font-size:12.5px;color:#111;font-weight:400;">Stav zásob nářadí na všech výdejnách</div>
<div style="left:54px;top:425px;width:11px;height:1px;background:repeating-linear-gradient(to right,#6a6a6a 0 1px,transparent 1px 2px)"></div>
<svg style="position:absolute;left:70px;top:418px;" width="7" height="12" viewBox="0 0 7 12"><defs><linearGradient id="ag" x1="0" y1="0" x2="1" y2="1"><stop offset="0" stop-color="#3a8fb0"/><stop offset="1" stop-color="#14506a"/></linearGradient></defs><polygon points="0,0 6.5,6 0,12" fill="url(#ag)"/></svg>
<div class="t" style="left:86px;top:418.72px;font-size:12.5px;color:#111;font-weight:400;">Stav zásob všeho nářadí dle rozlišovacích atributů</div>
<div style="left:54px;top:443px;width:11px;height:1px;background:repeating-linear-gradient(to right,#6a6a6a 0 1px,transparent 1px 2px)"></div>
<svg style="position:absolute;left:70px;top:436px;" width="7" height="12" viewBox="0 0 7 12"><defs><linearGradient id="ag" x1="0" y1="0" x2="1" y2="1"><stop offset="0" stop-color="#3a8fb0"/><stop offset="1" stop-color="#14506a"/></linearGradient></defs><polygon points="0,0 6.5,6 0,12" fill="url(#ag)"/></svg>
<div class="t" style="left:86px;top:436.72px;font-size:12.5px;color:#111;font-weight:400;">Skutečná umístění nářadí</div>
<div style="left:54px;top:461px;width:11px;height:1px;background:repeating-linear-gradient(to right,#6a6a6a 0 1px,transparent 1px 2px)"></div>
<svg style="position:absolute;left:70px;top:454px;" width="7" height="12" viewBox="0 0 7 12"><defs><linearGradient id="ag" x1="0" y1="0" x2="1" y2="1"><stop offset="0" stop-color="#3a8fb0"/><stop offset="1" stop-color="#14506a"/></linearGradient></defs><polygon points="0,0 6.5,6 0,12" fill="url(#ag)"/></svg>
<div class="t" style="left:86px;top:454.72px;font-size:12.5px;color:#111;font-weight:400;">Nářadí bez umístění</div>
<div style="left:54px;top:479px;width:11px;height:1px;background:repeating-linear-gradient(to right,#6a6a6a 0 1px,transparent 1px 2px)"></div>
<svg style="position:absolute;left:70px;top:472px;" width="7" height="12" viewBox="0 0 7 12"><defs><linearGradient id="ag" x1="0" y1="0" x2="1" y2="1"><stop offset="0" stop-color="#3a8fb0"/><stop offset="1" stop-color="#14506a"/></linearGradient></defs><polygon points="0,0 6.5,6 0,12" fill="url(#ag)"/></svg>
<div class="t" style="left:86px;top:472.72px;font-size:12.5px;color:#111;font-weight:400;">Skutečná umístění nářadí s rozlišovacími atributy</div>
<div style="left:54px;top:497px;width:11px;height:1px;background:repeating-linear-gradient(to right,#6a6a6a 0 1px,transparent 1px 2px)"></div>
<svg style="position:absolute;left:70px;top:490px;" width="7" height="12" viewBox="0 0 7 12"><defs><linearGradient id="ag" x1="0" y1="0" x2="1" y2="1"><stop offset="0" stop-color="#3a8fb0"/><stop offset="1" stop-color="#14506a"/></linearGradient></defs><polygon points="0,0 6.5,6 0,12" fill="url(#ag)"/></svg>
<div class="t" style="left:86px;top:490.72px;font-size:12.5px;color:#111;font-weight:400;">Nářadí s rozlišovacími atributy bez umístění</div>
<div style="left:54px;top:515px;width:11px;height:1px;background:repeating-linear-gradient(to right,#6a6a6a 0 1px,transparent 1px 2px)"></div>
<svg style="position:absolute;left:70px;top:508px;" width="7" height="12" viewBox="0 0 7 12"><defs><linearGradient id="ag" x1="0" y1="0" x2="1" y2="1"><stop offset="0" stop-color="#3a8fb0"/><stop offset="1" stop-color="#14506a"/></linearGradient></defs><polygon points="0,0 6.5,6 0,12" fill="url(#ag)"/></svg>
<div class="t" style="left:86px;top:508.72px;font-size:12.5px;color:#111;font-weight:400;">Skutečná umístění nářadí - včetně nulových</div>
<div style="left:54px;top:533px;width:11px;height:1px;background:repeating-linear-gradient(to right,#6a6a6a 0 1px,transparent 1px 2px)"></div>
<svg style="position:absolute;left:70px;top:526px;" width="7" height="12" viewBox="0 0 7 12"><defs><linearGradient id="ag" x1="0" y1="0" x2="1" y2="1"><stop offset="0" stop-color="#3a8fb0"/><stop offset="1" stop-color="#14506a"/></linearGradient></defs><polygon points="0,0 6.5,6 0,12" fill="url(#ag)"/></svg>
<div class="t" style="left:86px;top:526.72px;font-size:12.5px;color:#111;font-weight:400;">Skutečná umístění nářadí s rozlišovacími atributy</div>
<div style="left:35px;top:551px;width:11px;height:1px;background:repeating-linear-gradient(to right,#6a6a6a 0 1px,transparent 1px 2px)"></div>
<svg style="position:absolute;left:51px;top:544px;" width="7" height="12" viewBox="0 0 7 12"><defs><linearGradient id="ag" x1="0" y1="0" x2="1" y2="1"><stop offset="0" stop-color="#3a8fb0"/><stop offset="1" stop-color="#14506a"/></linearGradient></defs><polygon points="0,0 6.5,6 0,12" fill="url(#ag)"/></svg>
<div class="t" style="left:67px;top:544.72px;font-size:12.5px;color:#111;font-weight:400;">Měřidla</div>
<div style="left:35px;top:569px;width:11px;height:1px;background:repeating-linear-gradient(to right,#6a6a6a 0 1px,transparent 1px 2px)"></div>
<svg style="position:absolute;left:51px;top:562px;" width="7" height="12" viewBox="0 0 7 12"><defs><linearGradient id="ag" x1="0" y1="0" x2="1" y2="1"><stop offset="0" stop-color="#3a8fb0"/><stop offset="1" stop-color="#14506a"/></linearGradient></defs><polygon points="0,0 6.5,6 0,12" fill="url(#ag)"/></svg>
<div class="t" style="left:67px;top:562.72px;font-size:12.5px;color:#111;font-weight:400;">Speciální nářadí a přípravky</div>
<div style="left:35px;top:587px;width:11px;height:1px;background:repeating-linear-gradient(to right,#6a6a6a 0 1px,transparent 1px 2px)"></div>
<svg style="position:absolute;left:51px;top:580px;" width="7" height="12" viewBox="0 0 7 12"><defs><linearGradient id="ag" x1="0" y1="0" x2="1" y2="1"><stop offset="0" stop-color="#3a8fb0"/><stop offset="1" stop-color="#14506a"/></linearGradient></defs><polygon points="0,0 6.5,6 0,12" fill="url(#ag)"/></svg>
<div class="t" style="left:67px;top:580.72px;font-size:12.5px;color:#111;font-weight:400;">Přehled předepsané údržby nářadí a měřidel</div>
<div style="left:35px;top:605px;width:11px;height:1px;background:repeating-linear-gradient(to right,#6a6a6a 0 1px,transparent 1px 2px)"></div>
<svg style="position:absolute;left:51px;top:598px;" width="7" height="12" viewBox="0 0 7 12"><defs><linearGradient id="ag" x1="0" y1="0" x2="1" y2="1"><stop offset="0" stop-color="#3a8fb0"/><stop offset="1" stop-color="#14506a"/></linearGradient></defs><polygon points="0,0 6.5,6 0,12" fill="url(#ag)"/></svg>
<div class="t" style="left:67px;top:598.72px;font-size:12.5px;color:#111;font-weight:400;">Etalony</div>
<div style="left:35px;top:623px;width:11px;height:1px;background:repeating-linear-gradient(to right,#6a6a6a 0 1px,transparent 1px 2px)"></div>
<svg style="position:absolute;left:51px;top:616px;" width="7" height="12" viewBox="0 0 7 12"><defs><linearGradient id="ag" x1="0" y1="0" x2="1" y2="1"><stop offset="0" stop-color="#3a8fb0"/><stop offset="1" stop-color="#14506a"/></linearGradient></defs><polygon points="0,0 6.5,6 0,12" fill="url(#ag)"/></svg>
<div class="t" style="left:67px;top:616.72px;font-size:12.5px;color:#111;font-weight:400;">Kalibrace měřidel</div>
<div style="left:20px;top:641px;width:7px;height:1px;background:repeating-linear-gradient(to right,#6a6a6a 0 1px,transparent 1px 2px)"></div>
<div style="left:12px;top:637px;width:9px;height:9px;background:linear-gradient(#fff,#e6e6e6);border:1px solid #9a9a9a;border-radius:1px"></div>
<div style="left:14px;top:641px;width:5px;height:1px;background:#2848a0"></div>
<div style="left:16px;top:639px;width:1px;height:5px;background:#2848a0"></div>
<svg style="position:absolute;left:27px;top:634px;" width="16" height="13" viewBox="0 0 16 13"><defs><linearGradient id="fd" x1="0" y1="0" x2="1" y2="1"><stop offset="0" stop-color="#c9ecf8"/><stop offset=".6" stop-color="#59b2d8"/><stop offset="1" stop-color="#1d7ea8"/></linearGradient></defs><path d="M0.5 1.5h5l1 1.5h8v9.5h-14z" fill="url(#fd)" stroke="#1b6f94" stroke-width=".6"/><rect x="0.5" y="11" width="14.5" height="1.5" fill="#0f2f40"/></svg>
<div class="t" style="left:48px;top:634.72px;font-size:12.5px;color:#111;font-weight:400;">Kompletace</div>
<div style="left:20px;top:659px;width:7px;height:1px;background:repeating-linear-gradient(to right,#6a6a6a 0 1px,transparent 1px 2px)"></div>
<div style="left:12px;top:655px;width:9px;height:9px;background:linear-gradient(#fff,#e6e6e6);border:1px solid #9a9a9a;border-radius:1px"></div>
<div style="left:14px;top:659px;width:5px;height:1px;background:#2848a0"></div>
<div style="left:16px;top:657px;width:1px;height:5px;background:#2848a0"></div>
<svg style="position:absolute;left:27px;top:652px;" width="16" height="13" viewBox="0 0 16 13"><defs><linearGradient id="fd" x1="0" y1="0" x2="1" y2="1"><stop offset="0" stop-color="#c9ecf8"/><stop offset=".6" stop-color="#59b2d8"/><stop offset="1" stop-color="#1d7ea8"/></linearGradient></defs><path d="M0.5 1.5h5l1 1.5h8v9.5h-14z" fill="url(#fd)" stroke="#1b6f94" stroke-width=".6"/><rect x="0.5" y="11" width="14.5" height="1.5" fill="#0f2f40"/></svg>
<div class="t" style="left:48px;top:652.72px;font-size:12.5px;color:#111;font-weight:400;">Evidence instalací softwaru</div>
<div style="left:20px;top:677px;width:7px;height:1px;background:repeating-linear-gradient(to right,#6a6a6a 0 1px,transparent 1px 2px)"></div>
<div style="left:12px;top:673px;width:9px;height:9px;background:linear-gradient(#fff,#e6e6e6);border:1px solid #9a9a9a;border-radius:1px"></div>
<div style="left:14px;top:677px;width:5px;height:1px;background:#2848a0"></div>
<div style="left:16px;top:675px;width:1px;height:5px;background:#2848a0"></div>
<svg style="position:absolute;left:27px;top:670px;" width="16" height="13" viewBox="0 0 16 13"><defs><linearGradient id="fd" x1="0" y1="0" x2="1" y2="1"><stop offset="0" stop-color="#c9ecf8"/><stop offset=".6" stop-color="#59b2d8"/><stop offset="1" stop-color="#1d7ea8"/></linearGradient></defs><path d="M0.5 1.5h5l1 1.5h8v9.5h-14z" fill="url(#fd)" stroke="#1b6f94" stroke-width=".6"/><rect x="0.5" y="11" width="14.5" height="1.5" fill="#0f2f40"/></svg>
<div class="t" style="left:48px;top:670.72px;font-size:12.5px;color:#111;font-weight:400;">Evidence instalací pro partnery</div>
<div style="left:20px;top:695px;width:7px;height:1px;background:repeating-linear-gradient(to right,#6a6a6a 0 1px,transparent 1px 2px)"></div>
<div style="left:12px;top:691px;width:9px;height:9px;background:linear-gradient(#fff,#e6e6e6);border:1px solid #9a9a9a;border-radius:1px"></div>
<div style="left:14px;top:695px;width:5px;height:1px;background:#2848a0"></div>
<div style="left:16px;top:693px;width:1px;height:5px;background:#2848a0"></div>
<svg style="position:absolute;left:27px;top:688px;" width="16" height="13" viewBox="0 0 16 13"><defs><linearGradient id="fd" x1="0" y1="0" x2="1" y2="1"><stop offset="0" stop-color="#c9ecf8"/><stop offset=".6" stop-color="#59b2d8"/><stop offset="1" stop-color="#1d7ea8"/></linearGradient></defs><path d="M0.5 1.5h5l1 1.5h8v9.5h-14z" fill="url(#fd)" stroke="#1b6f94" stroke-width=".6"/><rect x="0.5" y="11" width="14.5" height="1.5" fill="#0f2f40"/></svg>
<div class="t" style="left:48px;top:688.72px;font-size:12.5px;color:#111;font-weight:400;">Knowledge management</div>
<div style="left:20px;top:713px;width:7px;height:1px;background:repeating-linear-gradient(to right,#6a6a6a 0 1px,transparent 1px 2px)"></div>
<div style="left:12px;top:709px;width:9px;height:9px;background:linear-gradient(#fff,#e6e6e6);border:1px solid #9a9a9a;border-radius:1px"></div>
<div style="left:14px;top:713px;width:5px;height:1px;background:#2848a0"></div>
<div style="left:16px;top:711px;width:1px;height:5px;background:#2848a0"></div>
<svg style="position:absolute;left:27px;top:706px;" width="16" height="13" viewBox="0 0 16 13"><defs><linearGradient id="fd" x1="0" y1="0" x2="1" y2="1"><stop offset="0" stop-color="#c9ecf8"/><stop offset=".6" stop-color="#59b2d8"/><stop offset="1" stop-color="#1d7ea8"/></linearGradient></defs><path d="M0.5 1.5h5l1 1.5h8v9.5h-14z" fill="url(#fd)" stroke="#1b6f94" stroke-width=".6"/><rect x="0.5" y="11" width="14.5" height="1.5" fill="#0f2f40"/></svg>
<div class="t" style="left:48px;top:706.72px;font-size:12.5px;color:#111;font-weight:400;">Správa dokumentů (DMS)</div>
<div style="left:20px;top:731px;width:7px;height:1px;background:repeating-linear-gradient(to right,#6a6a6a 0 1px,transparent 1px 2px)"></div>
<div style="left:12px;top:727px;width:9px;height:9px;background:linear-gradient(#fff,#e6e6e6);border:1px solid #9a9a9a;border-radius:1px"></div>
<div style="left:14px;top:731px;width:5px;height:1px;background:#2848a0"></div>
<div style="left:16px;top:729px;width:1px;height:5px;background:#2848a0"></div>
<svg style="position:absolute;left:27px;top:724px;" width="16" height="13" viewBox="0 0 16 13"><defs><linearGradient id="fd" x1="0" y1="0" x2="1" y2="1"><stop offset="0" stop-color="#c9ecf8"/><stop offset=".6" stop-color="#59b2d8"/><stop offset="1" stop-color="#1d7ea8"/></linearGradient></defs><path d="M0.5 1.5h5l1 1.5h8v9.5h-14z" fill="url(#fd)" stroke="#1b6f94" stroke-width=".6"/><rect x="0.5" y="11" width="14.5" height="1.5" fill="#0f2f40"/></svg>
<div class="t" style="left:48px;top:724.72px;font-size:12.5px;color:#111;font-weight:400;">Souhrnné pohledy</div>
<div style="left:20px;top:749px;width:7px;height:1px;background:repeating-linear-gradient(to right,#6a6a6a 0 1px,transparent 1px 2px)"></div>
<div style="left:12px;top:745px;width:9px;height:9px;background:linear-gradient(#fff,#e6e6e6);border:1px solid #9a9a9a;border-radius:1px"></div>
<div style="left:14px;top:749px;width:5px;height:1px;background:#2848a0"></div>
<div style="left:16px;top:747px;width:1px;height:5px;background:#2848a0"></div>
<svg style="position:absolute;left:27px;top:742px;" width="16" height="13" viewBox="0 0 16 13"><defs><linearGradient id="fd" x1="0" y1="0" x2="1" y2="1"><stop offset="0" stop-color="#c9ecf8"/><stop offset=".6" stop-color="#59b2d8"/><stop offset="1" stop-color="#1d7ea8"/></linearGradient></defs><path d="M0.5 1.5h5l1 1.5h8v9.5h-14z" fill="url(#fd)" stroke="#1b6f94" stroke-width=".6"/><rect x="0.5" y="11" width="14.5" height="1.5" fill="#0f2f40"/></svg>
<div class="t" style="left:48px;top:742.72px;font-size:12.5px;color:#111;font-weight:400;">Manažerské přehledy (BI)</div>
<div style="left:20px;top:767px;width:7px;height:1px;background:repeating-linear-gradient(to right,#6a6a6a 0 1px,transparent 1px 2px)"></div>
<div style="left:12px;top:763px;width:9px;height:9px;background:linear-gradient(#fff,#e6e6e6);border:1px solid #9a9a9a;border-radius:1px"></div>
<div style="left:14px;top:767px;width:5px;height:1px;background:#2848a0"></div>
<div style="left:16px;top:765px;width:1px;height:5px;background:#2848a0"></div>
<svg style="position:absolute;left:27px;top:760px;" width="16" height="13" viewBox="0 0 16 13"><defs><linearGradient id="fd" x1="0" y1="0" x2="1" y2="1"><stop offset="0" stop-color="#c9ecf8"/><stop offset=".6" stop-color="#59b2d8"/><stop offset="1" stop-color="#1d7ea8"/></linearGradient></defs><path d="M0.5 1.5h5l1 1.5h8v9.5h-14z" fill="url(#fd)" stroke="#1b6f94" stroke-width=".6"/><rect x="0.5" y="11" width="14.5" height="1.5" fill="#0f2f40"/></svg>
<div class="t" style="left:48px;top:760.72px;font-size:12.5px;color:#111;font-weight:400;">Správa nemovitostí</div>
<div style="left:20px;top:785px;width:7px;height:1px;background:repeating-linear-gradient(to right,#6a6a6a 0 1px,transparent 1px 2px)"></div>
<div style="left:12px;top:781px;width:9px;height:9px;background:linear-gradient(#fff,#e6e6e6);border:1px solid #9a9a9a;border-radius:1px"></div>
<div style="left:14px;top:785px;width:5px;height:1px;background:#2848a0"></div>
<div style="left:16px;top:783px;width:1px;height:5px;background:#2848a0"></div>
<svg style="position:absolute;left:27px;top:778px;" width="16" height="13" viewBox="0 0 16 13"><defs><linearGradient id="fd" x1="0" y1="0" x2="1" y2="1"><stop offset="0" stop-color="#c9ecf8"/><stop offset=".6" stop-color="#59b2d8"/><stop offset="1" stop-color="#1d7ea8"/></linearGradient></defs><path d="M0.5 1.5h5l1 1.5h8v9.5h-14z" fill="url(#fd)" stroke="#1b6f94" stroke-width=".6"/><rect x="0.5" y="11" width="14.5" height="1.5" fill="#0f2f40"/></svg>
<div class="t" style="left:48px;top:778.72px;font-size:12.5px;color:#111;font-weight:400;">Správa nemovitostí (nové)</div>
<div style="left:20px;top:803px;width:7px;height:1px;background:repeating-linear-gradient(to right,#6a6a6a 0 1px,transparent 1px 2px)"></div>
<div style="left:12px;top:799px;width:9px;height:9px;background:linear-gradient(#fff,#e6e6e6);border:1px solid #9a9a9a;border-radius:1px"></div>
<div style="left:14px;top:803px;width:5px;height:1px;background:#2848a0"></div>
<div style="left:16px;top:801px;width:1px;height:5px;background:#2848a0"></div>
<svg style="position:absolute;left:27px;top:796px;" width="16" height="13" viewBox="0 0 16 13"><defs><linearGradient id="fd" x1="0" y1="0" x2="1" y2="1"><stop offset="0" stop-color="#c9ecf8"/><stop offset=".6" stop-color="#59b2d8"/><stop offset="1" stop-color="#1d7ea8"/></linearGradient></defs><path d="M0.5 1.5h5l1 1.5h8v9.5h-14z" fill="url(#fd)" stroke="#1b6f94" stroke-width=".6"/><rect x="0.5" y="11" width="14.5" height="1.5" fill="#0f2f40"/></svg>
<div class="t" style="left:48px;top:796.72px;font-size:12.5px;color:#111;font-weight:400;">Vodárenství</div>
<div style="left:20px;top:821px;width:7px;height:1px;background:repeating-linear-gradient(to right,#6a6a6a 0 1px,transparent 1px 2px)"></div>
<div style="left:12px;top:817px;width:9px;height:9px;background:linear-gradient(#fff,#e6e6e6);border:1px solid #9a9a9a;border-radius:1px"></div>
<div style="left:14px;top:821px;width:5px;height:1px;background:#2848a0"></div>
<div style="left:16px;top:819px;width:1px;height:5px;background:#2848a0"></div>
<svg style="position:absolute;left:27px;top:814px;" width="16" height="13" viewBox="0 0 16 13"><defs><linearGradient id="fd" x1="0" y1="0" x2="1" y2="1"><stop offset="0" stop-color="#c9ecf8"/><stop offset=".6" stop-color="#59b2d8"/><stop offset="1" stop-color="#1d7ea8"/></linearGradient></defs><path d="M0.5 1.5h5l1 1.5h8v9.5h-14z" fill="url(#fd)" stroke="#1b6f94" stroke-width=".6"/><rect x="0.5" y="11" width="14.5" height="1.5" fill="#0f2f40"/></svg>
<div class="t" style="left:48px;top:814.72px;font-size:12.5px;color:#111;font-weight:400;">Zvířata</div>
<div style="left:20px;top:839px;width:7px;height:1px;background:repeating-linear-gradient(to right,#6a6a6a 0 1px,transparent 1px 2px)"></div>
<div style="left:12px;top:835px;width:9px;height:9px;background:linear-gradient(#fff,#e6e6e6);border:1px solid #9a9a9a;border-radius:1px"></div>
<div style="left:14px;top:839px;width:5px;height:1px;background:#2848a0"></div>
<div style="left:16px;top:837px;width:1px;height:5px;background:#2848a0"></div>
<svg style="position:absolute;left:27px;top:832px;" width="16" height="13" viewBox="0 0 16 13"><defs><linearGradient id="fd" x1="0" y1="0" x2="1" y2="1"><stop offset="0" stop-color="#c9ecf8"/><stop offset=".6" stop-color="#59b2d8"/><stop offset="1" stop-color="#1d7ea8"/></linearGradient></defs><path d="M0.5 1.5h5l1 1.5h8v9.5h-14z" fill="url(#fd)" stroke="#1b6f94" stroke-width=".6"/><rect x="0.5" y="11" width="14.5" height="1.5" fill="#0f2f40"/></svg>
<div class="t" style="left:48px;top:832.72px;font-size:12.5px;color:#111;font-weight:400;">QI Portály</div>
<div style="left:20px;top:857px;width:7px;height:1px;background:repeating-linear-gradient(to right,#6a6a6a 0 1px,transparent 1px 2px)"></div>
<div style="left:12px;top:853px;width:9px;height:9px;background:linear-gradient(#fff,#e6e6e6);border:1px solid #9a9a9a;border-radius:1px"></div>
<div style="left:14px;top:857px;width:5px;height:1px;background:#2848a0"></div>
<div style="left:16px;top:855px;width:1px;height:5px;background:#2848a0"></div>
<svg style="position:absolute;left:27px;top:850px;" width="16" height="13" viewBox="0 0 16 13"><defs><linearGradient id="fd" x1="0" y1="0" x2="1" y2="1"><stop offset="0" stop-color="#c9ecf8"/><stop offset=".6" stop-color="#59b2d8"/><stop offset="1" stop-color="#1d7ea8"/></linearGradient></defs><path d="M0.5 1.5h5l1 1.5h8v9.5h-14z" fill="url(#fd)" stroke="#1b6f94" stroke-width=".6"/><rect x="0.5" y="11" width="14.5" height="1.5" fill="#0f2f40"/></svg>
<div class="t" style="left:48px;top:850.72px;font-size:12.5px;color:#111;font-weight:400;">QI Mobile</div>
</div>
<div style="left:343px;top:121px;width:17px;height:876px;background:#f6f9fc"></div>
<div style="left:343px;top:339px;width:17px;height:642px;background:#d6e5f2"></div>
<svg style="position:absolute;left:347px;top:125px;" width="9" height="7" viewBox="0 0 9 7"><path d="M1 6L4.5 2L8 6" fill="none" stroke="#111" stroke-width="2"/></svg>
<svg style="position:absolute;left:347px;top:987px;" width="9" height="7" viewBox="0 0 9 7"><path d="M1 1L4.5 5L8 1" fill="none" stroke="#111" stroke-width="2"/></svg>
<div style="left:28px;top:998px;width:315px;height:17px;background:#f6f9fc"></div>
<div style="left:46px;top:998px;width:280px;height:17px;background:#eef4f8"></div>
<div style="left:65px;top:998px;width:176px;height:17px;background:#d6e5f2"></div>
<svg style="position:absolute;left:33px;top:1002px;" width="8" height="9" viewBox="0 0 8 9"><path d="M6 1L2 4.5L6 8" fill="none" stroke="#111" stroke-width="2"/></svg>
<svg style="position:absolute;left:331px;top:1002px;" width="8" height="9" viewBox="0 0 8 9"><path d="M2 1L6 4.5L2 8" fill="none" stroke="#111" stroke-width="2"/></svg>
<svg style="position:absolute;left:366px;top:72px;shape-rendering:auto" width="1314" height="948" viewBox="0 0 1314 948"><rect x="0" y="0" width="1314" height="948" fill="#004a97"/><rect x="12" y="0" width="1" height="948" fill="#fff"/><rect x="152" y="0" width="1" height="948" fill="#fff"/><rect x="291" y="0" width="1" height="948" fill="#fff"/><rect x="431" y="0" width="1" height="948" fill="#fff"/><rect x="571" y="0" width="1" height="948" fill="#fff"/><rect x="711" y="0" width="1" height="948" fill="#fff"/><rect x="850" y="0" width="1" height="948" fill="#fff"/><rect x="990" y="0" width="1" height="948" fill="#fff"/><rect x="0" y="139" width="1129" height="1" fill="#fff"/><rect x="1174" y="139" width="140" height="1" fill="#fff"/><rect x="0" y="279" width="1129" height="1" fill="#fff"/><rect x="1174" y="279" width="140" height="1" fill="#fff"/><rect x="0" y="418" width="1129" height="1" fill="#fff"/><rect x="1174" y="418" width="140" height="1" fill="#fff"/><rect x="0" y="558" width="1129" height="1" fill="#fff"/><rect x="1174" y="558" width="140" height="1" fill="#fff"/><rect x="0" y="698" width="1129" height="1" fill="#fff"/><rect x="1174" y="698" width="140" height="1" fill="#fff"/><rect x="0" y="838" width="1129" height="1" fill="#fff"/><rect x="1174" y="838" width="140" height="1" fill="#fff"/><rect x="1129" y="0" width="45" height="948" fill="#fff"/><rect x="1130.50" y="0.10" width="7.6" height="7.6" fill="#004a97"/><rect x="1130.50" y="8.83" width="7.6" height="7.6" fill="#004a97"/><rect x="1130.50" y="17.57" width="7.6" height="7.6" fill="#004a97"/><rect x="1130.50" y="26.30" width="7.6" height="7.6" fill="#004a97"/><rect x="1130.50" y="35.04" width="7.6" height="7.6" fill="#004a97"/><rect x="1139.20" y="35.04" width="7.6" height="7.6" fill="#004a97"/><rect x="1148.00" y="35.04" width="7.6" height="7.6" fill="#004a97"/><rect x="1156.70" y="35.04" width="7.6" height="7.6" fill="#004a97"/><rect x="1165.40" y="35.04" width="7.6" height="7.6" fill="#004a97"/><rect x="1130.50" y="43.77" width="7.6" height="7.6" fill="#004a97"/><rect x="1130.50" y="52.50" width="7.6" height="7.6" fill="#004a97"/><rect x="1130.50" y="61.24" width="7.6" height="7.6" fill="#004a97"/><rect x="1130.50" y="69.97" width="7.6" height="7.6" fill="#004a97"/><rect x="1130.50" y="78.71" width="7.6" height="7.6" fill="#004a97"/><rect x="1130.50" y="87.44" width="7.6" height="7.6" fill="#004a97"/><rect x="1130.50" y="96.17" width="7.6" height="7.6" fill="#004a97"/><rect x="1130.50" y="104.91" width="7.6" height="7.6" fill="#004a97"/><rect x="1130.50" y="113.64" width="7.6" height="7.6" fill="#004a97"/><rect x="1130.50" y="122.38" width="7.6" height="7.6" fill="#004a97"/><rect x="1130.50" y="131.11" width="7.6" height="7.6" fill="#004a97"/><rect x="1130.50" y="139.84" width="7.6" height="7.6" fill="#004a97"/><rect x="1139.20" y="139.84" width="7.6" height="7.6" fill="#004a97"/><rect x="1148.00" y="139.84" width="7.6" height="7.6" fill="#004a97"/><rect x="1156.70" y="139.84" width="7.6" height="7.6" fill="#004a97"/><rect x="1165.40" y="139.84" width="7.6" height="7.6" fill="#004a97"/><rect x="1130.50" y="148.58" width="7.6" height="7.6" fill="#004a97"/><rect x="1139.20" y="148.58" width="7.6" height="7.6" fill="#004a97"/><rect x="1148.00" y="148.58" width="7.6" height="7.6" fill="#004a97"/><rect x="1156.70" y="148.58" width="7.6" height="7.6" fill="#004a97"/><rect x="1165.40" y="148.58" width="7.6" height="7.6" fill="#004a97"/><rect x="1130.50" y="157.31" width="7.6" height="7.6" fill="#004a97"/><rect x="1139.20" y="157.31" width="7.6" height="7.6" fill="#004a97"/><rect x="1148.00" y="157.31" width="7.6" height="7.6" fill="#004a97"/><rect x="1156.70" y="157.31" width="7.6" height="7.6" fill="#004a97"/><rect x="1165.40" y="157.31" width="7.6" height="7.6" fill="#004a97"/><rect x="1130.50" y="166.05" width="7.6" height="7.6" fill="#004a97"/><rect x="1139.20" y="166.05" width="7.6" height="7.6" fill="#004a97"/><rect x="1148.00" y="166.05" width="7.6" height="7.6" fill="#004a97"/><rect x="1156.70" y="166.05" width="7.6" height="7.6" fill="#004a97"/><rect x="1165.40" y="166.05" width="7.6" height="7.6" fill="#004a97"/><rect x="1130.50" y="174.78" width="7.6" height="7.6" fill="#004a97"/><rect x="1139.20" y="174.78" width="7.6" height="7.6" fill="#004a97"/><rect x="1148.00" y="174.78" width="7.6" height="7.6" fill="#004a97"/><rect x="1156.70" y="174.78" width="7.6" height="7.6" fill="#004a97"/><rect x="1165.40" y="174.78" width="7.6" height="7.6" fill="#004a97"/><rect x="1130.50" y="183.51" width="7.6" height="7.6" fill="#004a97"/><rect x="1139.20" y="183.51" width="7.6" height="7.6" fill="#004a97"/><rect x="1148.00" y="183.51" width="7.6" height="7.6" fill="#004a97"/><rect x="1156.70" y="183.51" width="7.6" height="7.6" fill="#004a97"/><rect x="1165.40" y="183.51" width="7.6" height="7.6" fill="#004a97"/><rect x="1130.50" y="192.25" width="7.6" height="7.6" fill="#004a97"/><rect x="1139.20" y="192.25" width="7.6" height="7.6" fill="#004a97"/><rect x="1148.00" y="192.25" width="7.6" height="7.6" fill="#004a97"/><rect x="1156.70" y="192.25" width="7.6" height="7.6" fill="#004a97"/><rect x="1165.40" y="192.25" width="7.6" height="7.6" fill="#004a97"/><rect x="1130.50" y="200.98" width="7.6" height="7.6" fill="#004a97"/><rect x="1139.20" y="200.98" width="7.6" height="7.6" fill="#004a97"/><rect x="1148.00" y="200.98" width="7.6" height="7.6" fill="#004a97"/><rect x="1156.70" y="200.98" width="7.6" height="7.6" fill="#004a97"/><rect x="1165.40" y="200.98" width="7.6" height="7.6" fill="#004a97"/><rect x="1130.50" y="209.72" width="7.6" height="7.6" fill="#004a97"/><rect x="1139.20" y="209.72" width="7.6" height="7.6" fill="#004a97"/><rect x="1148.00" y="209.72" width="7.6" height="7.6" fill="#004a97"/><rect x="1156.70" y="209.72" width="7.6" height="7.6" fill="#004a97"/><rect x="1165.40" y="209.72" width="7.6" height="7.6" fill="#004a97"/><rect x="1130.50" y="218.45" width="7.6" height="7.6" fill="#004a97"/><rect x="1139.20" y="218.45" width="7.6" height="7.6" fill="#004a97"/><rect x="1148.00" y="218.45" width="7.6" height="7.6" fill="#004a97"/><rect x="1156.70" y="218.45" width="7.6" height="7.6" fill="#004a97"/><rect x="1165.40" y="218.45" width="7.6" height="7.6" fill="#004a97"/><rect x="1130.50" y="227.18" width="7.6" height="7.6" fill="#004a97"/><rect x="1139.20" y="227.18" width="7.6" height="7.6" fill="#004a97"/><rect x="1148.00" y="227.18" width="7.6" height="7.6" fill="#004a97"/><rect x="1156.70" y="227.18" width="7.6" height="7.6" fill="#004a97"/><rect x="1165.40" y="227.18" width="7.6" height="7.6" fill="#004a97"/><rect x="1130.50" y="235.92" width="7.6" height="7.6" fill="#004a97"/><rect x="1139.20" y="235.92" width="7.6" height="7.6" fill="#004a97"/><rect x="1148.00" y="235.92" width="7.6" height="7.6" fill="#004a97"/><rect x="1156.70" y="235.92" width="7.6" height="7.6" fill="#004a97"/><rect x="1165.40" y="235.92" width="7.6" height="7.6" fill="#004a97"/><rect x="1130.50" y="244.65" width="7.6" height="7.6" fill="#004a97"/><rect x="1139.20" y="244.65" width="7.6" height="7.6" fill="#004a97"/><rect x="1148.00" y="244.65" width="7.6" height="7.6" fill="#004a97"/><rect x="1156.70" y="244.65" width="7.6" height="7.6" fill="#004a97"/><rect x="1165.40" y="244.65" width="7.6" height="7.6" fill="#004a97"/><rect x="1130.50" y="253.39" width="7.6" height="7.6" fill="#004a97"/><rect x="1139.20" y="253.39" width="7.6" height="7.6" fill="#004a97"/><rect x="1148.00" y="253.39" width="7.6" height="7.6" fill="#004a97"/><rect x="1156.70" y="253.39" width="7.6" height="7.6" fill="#004a97"/><rect x="1165.40" y="253.39" width="7.6" height="7.6" fill="#004a97"/><rect x="1130.50" y="262.12" width="7.6" height="7.6" fill="#004a97"/><rect x="1139.20" y="262.12" width="7.6" height="7.6" fill="#004a97"/><rect x="1148.00" y="262.12" width="7.6" height="7.6" fill="#004a97"/><rect x="1156.70" y="262.12" width="7.6" height="7.6" fill="#004a97"/><rect x="1165.40" y="262.12" width="7.6" height="7.6" fill="#004a97"/><rect x="1130.50" y="270.85" width="7.6" height="7.6" fill="#004a97"/><rect x="1139.20" y="270.85" width="7.6" height="7.6" fill="#004a97"/><rect x="1148.00" y="270.85" width="7.6" height="7.6" fill="#004a97"/><rect x="1156.70" y="270.85" width="7.6" height="7.6" fill="#004a97"/><rect x="1165.40" y="270.85" width="7.6" height="7.6" fill="#004a97"/><rect x="1130.50" y="279.59" width="7.6" height="7.6" fill="#004a97"/><rect x="1139.20" y="279.59" width="7.6" height="7.6" fill="#004a97"/><rect x="1148.00" y="279.59" width="7.6" height="7.6" fill="#004a97"/><rect x="1156.70" y="279.59" width="7.6" height="7.6" fill="#004a97"/><rect x="1165.40" y="279.59" width="7.6" height="7.6" fill="#004a97"/><rect x="1130.50" y="288.32" width="7.6" height="7.6" fill="#004a97"/><rect x="1139.20" y="288.32" width="7.6" height="7.6" fill="#004a97"/><rect x="1148.00" y="288.32" width="7.6" height="7.6" fill="#004a97"/><rect x="1156.70" y="288.32" width="7.6" height="7.6" fill="#004a97"/><rect x="1165.40" y="288.32" width="7.6" height="7.6" fill="#004a97"/><rect x="1130.50" y="297.06" width="7.6" height="7.6" fill="#004a97"/><rect x="1139.20" y="297.06" width="7.6" height="7.6" fill="#004a97"/><rect x="1148.00" y="297.06" width="7.6" height="7.6" fill="#004a97"/><rect x="1156.70" y="297.06" width="7.6" height="7.6" fill="#004a97"/><rect x="1165.40" y="297.06" width="7.6" height="7.6" fill="#004a97"/><rect x="1130.50" y="305.79" width="7.6" height="7.6" fill="#004a97"/><rect x="1139.20" y="305.79" width="7.6" height="7.6" fill="#004a97"/><rect x="1148.00" y="305.79" width="7.6" height="7.6" fill="#004a97"/><rect x="1156.70" y="305.79" width="7.6" height="7.6" fill="#004a97"/><rect x="1165.40" y="305.79" width="7.6" height="7.6" fill="#004a97"/><rect x="1130.50" y="314.52" width="7.6" height="7.6" fill="#004a97"/><rect x="1139.20" y="314.52" width="7.6" height="7.6" fill="#004a97"/><rect x="1148.00" y="314.52" width="7.6" height="7.6" fill="#004a97"/><rect x="1156.70" y="314.52" width="7.6" height="7.6" fill="#004a97"/><rect x="1165.40" y="314.52" width="7.6" height="7.6" fill="#004a97"/><rect x="1130.50" y="323.26" width="7.6" height="7.6" fill="#004a97"/><rect x="1139.20" y="323.26" width="7.6" height="7.6" fill="#004a97"/><rect x="1148.00" y="323.26" width="7.6" height="7.6" fill="#004a97"/><rect x="1156.70" y="323.26" width="7.6" height="7.6" fill="#004a97"/><rect x="1165.40" y="323.26" width="7.6" height="7.6" fill="#004a97"/><rect x="1130.50" y="331.99" width="7.6" height="7.6" fill="#004a97"/><rect x="1139.20" y="331.99" width="7.6" height="7.6" fill="#004a97"/><rect x="1148.00" y="331.99" width="7.6" height="7.6" fill="#004a97"/><rect x="1156.70" y="331.99" width="7.6" height="7.6" fill="#004a97"/><rect x="1165.40" y="331.99" width="7.6" height="7.6" fill="#004a97"/><rect x="1130.50" y="340.73" width="7.6" height="7.6" fill="#004a97"/><rect x="1139.20" y="340.73" width="7.6" height="7.6" fill="#004a97"/><rect x="1148.00" y="340.73" width="7.6" height="7.6" fill="#004a97"/><rect x="1156.70" y="340.73" width="7.6" height="7.6" fill="#004a97"/><rect x="1165.40" y="340.73" width="7.6" height="7.6" fill="#004a97"/><rect x="1130.50" y="349.46" width="7.6" height="7.6" fill="#004a97"/><rect x="1139.20" y="349.46" width="7.6" height="7.6" fill="#004a97"/><rect x="1148.00" y="349.46" width="7.6" height="7.6" fill="#004a97"/><rect x="1156.70" y="349.46" width="7.6" height="7.6" fill="#004a97"/><rect x="1165.40" y="349.46" width="7.6" height="7.6" fill="#004a97"/><rect x="1130.50" y="358.19" width="7.6" height="7.6" fill="#004a97"/><rect x="1139.20" y="358.19" width="7.6" height="7.6" fill="#004a97"/><rect x="1148.00" y="358.19" width="7.6" height="7.6" fill="#004a97"/><rect x="1156.70" y="358.19" width="7.6" height="7.6" fill="#004a97"/><rect x="1165.40" y="358.19" width="7.6" height="7.6" fill="#004a97"/><rect x="1130.50" y="366.93" width="7.6" height="7.6" fill="#004a97"/><rect x="1139.20" y="366.93" width="7.6" height="7.6" fill="#004a97"/><rect x="1148.00" y="366.93" width="7.6" height="7.6" fill="#004a97"/><rect x="1156.70" y="366.93" width="7.6" height="7.6" fill="#004a97"/><rect x="1165.40" y="366.93" width="7.6" height="7.6" fill="#004a97"/><rect x="1130.50" y="375.66" width="7.6" height="7.6" fill="#004a97"/><rect x="1139.20" y="375.66" width="7.6" height="7.6" fill="#004a97"/><rect x="1148.00" y="375.66" width="7.6" height="7.6" fill="#004a97"/><rect x="1156.70" y="375.66" width="7.6" height="7.6" fill="#004a97"/><rect x="1165.40" y="375.66" width="7.6" height="7.6" fill="#004a97"/><rect x="1130.50" y="384.40" width="7.6" height="7.6" fill="#004a97"/><rect x="1139.20" y="384.40" width="7.6" height="7.6" fill="#004a97"/><rect x="1148.00" y="384.40" width="7.6" height="7.6" fill="#004a97"/><rect x="1156.70" y="384.40" width="7.6" height="7.6" fill="#004a97"/><rect x="1165.40" y="384.40" width="7.6" height="7.6" fill="#004a97"/><rect x="1130.50" y="393.13" width="7.6" height="7.6" fill="#004a97"/><rect x="1139.20" y="393.13" width="7.6" height="7.6" fill="#004a97"/><rect x="1148.00" y="393.13" width="7.6" height="7.6" fill="#004a97"/><rect x="1156.70" y="393.13" width="7.6" height="7.6" fill="#004a97"/><rect x="1165.40" y="393.13" width="7.6" height="7.6" fill="#004a97"/><rect x="1130.50" y="401.86" width="7.6" height="7.6" fill="#004a97"/><rect x="1139.20" y="401.86" width="7.6" height="7.6" fill="#004a97"/><rect x="1148.00" y="401.86" width="7.6" height="7.6" fill="#004a97"/><rect x="1156.70" y="401.86" width="7.6" height="7.6" fill="#004a97"/><rect x="1165.40" y="401.86" width="7.6" height="7.6" fill="#004a97"/><rect x="1130.50" y="410.60" width="7.6" height="7.6" fill="#004a97"/><rect x="1139.20" y="410.60" width="7.6" height="7.6" fill="#004a97"/><rect x="1148.00" y="410.60" width="7.6" height="7.6" fill="#004a97"/><rect x="1156.70" y="410.60" width="7.6" height="7.6" fill="#004a97"/><rect x="1165.40" y="410.60" width="7.6" height="7.6" fill="#004a97"/><rect x="1130.50" y="419.33" width="7.6" height="7.6" fill="#004a97"/><rect x="1139.20" y="419.33" width="7.6" height="7.6" fill="#004a97"/><rect x="1148.00" y="419.33" width="7.6" height="7.6" fill="#004a97"/><rect x="1156.70" y="419.33" width="7.6" height="7.6" fill="#004a97"/><rect x="1165.40" y="419.33" width="7.6" height="7.6" fill="#004a97"/><rect x="1130.50" y="428.07" width="7.6" height="7.6" fill="#004a97"/><rect x="1139.20" y="428.07" width="7.6" height="7.6" fill="#004a97"/><rect x="1148.00" y="428.07" width="7.6" height="7.6" fill="#004a97"/><rect x="1156.70" y="428.07" width="7.6" height="7.6" fill="#004a97"/><rect x="1165.40" y="428.07" width="7.6" height="7.6" fill="#004a97"/><rect x="1130.50" y="436.80" width="7.6" height="7.6" fill="#004a97"/><rect x="1139.20" y="436.80" width="7.6" height="7.6" fill="#004a97"/><rect x="1148.00" y="436.80" width="7.6" height="7.6" fill="#004a97"/><rect x="1156.70" y="436.80" width="7.6" height="7.6" fill="#004a97"/><rect x="1165.40" y="436.80" width="7.6" height="7.6" fill="#004a97"/><rect x="1130.50" y="445.53" width="7.6" height="7.6" fill="#004a97"/><rect x="1139.20" y="445.53" width="7.6" height="7.6" fill="#004a97"/><rect x="1148.00" y="445.53" width="7.6" height="7.6" fill="#004a97"/><rect x="1156.70" y="445.53" width="7.6" height="7.6" fill="#004a97"/><rect x="1165.40" y="445.53" width="7.6" height="7.6" fill="#004a97"/><rect x="1130.50" y="454.27" width="7.6" height="7.6" fill="#004a97"/><rect x="1139.20" y="454.27" width="7.6" height="7.6" fill="#004a97"/><rect x="1148.00" y="454.27" width="7.6" height="7.6" fill="#004a97"/><rect x="1156.70" y="454.27" width="7.6" height="7.6" fill="#004a97"/><rect x="1165.40" y="454.27" width="7.6" height="7.6" fill="#004a97"/><rect x="1130.50" y="463.00" width="7.6" height="7.6" fill="#004a97"/><rect x="1139.20" y="463.00" width="7.6" height="7.6" fill="#004a97"/><rect x="1148.00" y="463.00" width="7.6" height="7.6" fill="#004a97"/><rect x="1156.70" y="463.00" width="7.6" height="7.6" fill="#004a97"/><rect x="1165.40" y="463.00" width="7.6" height="7.6" fill="#004a97"/><rect x="1130.50" y="471.74" width="7.6" height="7.6" fill="#004a97"/><rect x="1139.20" y="471.74" width="7.6" height="7.6" fill="#004a97"/><rect x="1148.00" y="471.74" width="7.6" height="7.6" fill="#004a97"/><rect x="1156.70" y="471.74" width="7.6" height="7.6" fill="#004a97"/><rect x="1165.40" y="471.74" width="7.6" height="7.6" fill="#004a97"/><rect x="1130.50" y="480.47" width="7.6" height="7.6" fill="#004a97"/><rect x="1139.20" y="480.47" width="7.6" height="7.6" fill="#004a97"/><rect x="1148.00" y="480.47" width="7.6" height="7.6" fill="#004a97"/><rect x="1156.70" y="480.47" width="7.6" height="7.6" fill="#004a97"/><rect x="1165.40" y="480.47" width="7.6" height="7.6" fill="#004a97"/><rect x="1130.50" y="489.20" width="7.6" height="7.6" fill="#004a97"/><rect x="1139.20" y="489.20" width="7.6" height="7.6" fill="#004a97"/><rect x="1148.00" y="489.20" width="7.6" height="7.6" fill="#004a97"/><rect x="1156.70" y="489.20" width="7.6" height="7.6" fill="#004a97"/><rect x="1165.40" y="489.20" width="7.6" height="7.6" fill="#004a97"/><rect x="1130.50" y="497.94" width="7.6" height="7.6" fill="#004a97"/><rect x="1139.20" y="497.94" width="7.6" height="7.6" fill="#004a97"/><rect x="1148.00" y="497.94" width="7.6" height="7.6" fill="#004a97"/><rect x="1156.70" y="497.94" width="7.6" height="7.6" fill="#004a97"/><rect x="1165.40" y="497.94" width="7.6" height="7.6" fill="#004a97"/><rect x="1130.50" y="506.67" width="7.6" height="7.6" fill="#004a97"/><rect x="1139.20" y="506.67" width="7.6" height="7.6" fill="#004a97"/><rect x="1148.00" y="506.67" width="7.6" height="7.6" fill="#004a97"/><rect x="1156.70" y="506.67" width="7.6" height="7.6" fill="#004a97"/><rect x="1165.40" y="506.67" width="7.6" height="7.6" fill="#004a97"/><rect x="1130.50" y="515.41" width="7.6" height="7.6" fill="#004a97"/><rect x="1139.20" y="515.41" width="7.6" height="7.6" fill="#004a97"/><rect x="1148.00" y="515.41" width="7.6" height="7.6" fill="#004a97"/><rect x="1156.70" y="515.41" width="7.6" height="7.6" fill="#004a97"/><rect x="1165.40" y="515.41" width="7.6" height="7.6" fill="#004a97"/><rect x="1130.50" y="524.14" width="7.6" height="7.6" fill="#004a97"/><rect x="1139.20" y="524.14" width="7.6" height="7.6" fill="#004a97"/><rect x="1148.00" y="524.14" width="7.6" height="7.6" fill="#004a97"/><rect x="1156.70" y="524.14" width="7.6" height="7.6" fill="#004a97"/><rect x="1165.40" y="524.14" width="7.6" height="7.6" fill="#004a97"/><rect x="1130.50" y="532.87" width="7.6" height="7.6" fill="#004a97"/><rect x="1139.20" y="532.87" width="7.6" height="7.6" fill="#004a97"/><rect x="1148.00" y="532.87" width="7.6" height="7.6" fill="#004a97"/><rect x="1156.70" y="532.87" width="7.6" height="7.6" fill="#004a97"/><rect x="1165.40" y="532.87" width="7.6" height="7.6" fill="#004a97"/><rect x="1130.50" y="541.61" width="7.6" height="7.6" fill="#004a97"/><rect x="1139.20" y="541.61" width="7.6" height="7.6" fill="#004a97"/><rect x="1148.00" y="541.61" width="7.6" height="7.6" fill="#004a97"/><rect x="1156.70" y="541.61" width="7.6" height="7.6" fill="#004a97"/><rect x="1165.40" y="541.61" width="7.6" height="7.6" fill="#004a97"/><rect x="1130.50" y="550.34" width="7.6" height="7.6" fill="#004a97"/><rect x="1139.20" y="550.34" width="7.6" height="7.6" fill="#004a97"/><rect x="1148.00" y="550.34" width="7.6" height="7.6" fill="#004a97"/><rect x="1156.70" y="550.34" width="7.6" height="7.6" fill="#004a97"/><rect x="1165.40" y="550.34" width="7.6" height="7.6" fill="#004a97"/><rect x="1130.50" y="559.08" width="7.6" height="7.6" fill="#004a97"/><rect x="1139.20" y="559.08" width="7.6" height="7.6" fill="#004a97"/><rect x="1148.00" y="559.08" width="7.6" height="7.6" fill="#004a97"/><rect x="1156.70" y="559.08" width="7.6" height="7.6" fill="#004a97"/><rect x="1165.40" y="559.08" width="7.6" height="7.6" fill="#004a97"/><rect x="1130.50" y="567.81" width="7.6" height="7.6" fill="#004a97"/><rect x="1139.20" y="567.81" width="7.6" height="7.6" fill="#004a97"/><rect x="1148.00" y="567.81" width="7.6" height="7.6" fill="#004a97"/><rect x="1156.70" y="567.81" width="7.6" height="7.6" fill="#004a97"/><rect x="1165.40" y="567.81" width="7.6" height="7.6" fill="#004a97"/><rect x="1130.50" y="576.54" width="7.6" height="7.6" fill="#004a97"/><rect x="1139.20" y="576.54" width="7.6" height="7.6" fill="#004a97"/><rect x="1148.00" y="576.54" width="7.6" height="7.6" fill="#004a97"/><rect x="1156.70" y="576.54" width="7.6" height="7.6" fill="#004a97"/><rect x="1165.40" y="576.54" width="7.6" height="7.6" fill="#004a97"/><rect x="1130.50" y="585.28" width="7.6" height="7.6" fill="#004a97"/><rect x="1139.20" y="585.28" width="7.6" height="7.6" fill="#004a97"/><rect x="1148.00" y="585.28" width="7.6" height="7.6" fill="#004a97"/><rect x="1156.70" y="585.28" width="7.6" height="7.6" fill="#004a97"/><rect x="1165.40" y="585.28" width="7.6" height="7.6" fill="#004a97"/><rect x="1130.50" y="594.01" width="7.6" height="7.6" fill="#004a97"/><rect x="1139.20" y="594.01" width="7.6" height="7.6" fill="#004a97"/><rect x="1148.00" y="594.01" width="7.6" height="7.6" fill="#004a97"/><rect x="1156.70" y="594.01" width="7.6" height="7.6" fill="#004a97"/><rect x="1165.40" y="594.01" width="7.6" height="7.6" fill="#004a97"/><rect x="1130.50" y="602.75" width="7.6" height="7.6" fill="#004a97"/><rect x="1139.20" y="602.75" width="7.6" height="7.6" fill="#004a97"/><rect x="1148.00" y="602.75" width="7.6" height="7.6" fill="#004a97"/><rect x="1156.70" y="602.75" width="7.6" height="7.6" fill="#004a97"/><rect x="1165.40" y="602.75" width="7.6" height="7.6" fill="#004a97"/><rect x="1130.50" y="611.48" width="7.6" height="7.6" fill="#004a97"/><rect x="1139.20" y="611.48" width="7.6" height="7.6" fill="#004a97"/><rect x="1148.00" y="611.48" width="7.6" height="7.6" fill="#004a97"/><rect x="1156.70" y="611.48" width="7.6" height="7.6" fill="#004a97"/><rect x="1165.40" y="611.48" width="7.6" height="7.6" fill="#004a97"/><rect x="1130.50" y="620.21" width="7.6" height="7.6" fill="#004a97"/><rect x="1139.20" y="620.21" width="7.6" height="7.6" fill="#004a97"/><rect x="1148.00" y="620.21" width="7.6" height="7.6" fill="#004a97"/><rect x="1156.70" y="620.21" width="7.6" height="7.6" fill="#004a97"/><rect x="1165.40" y="620.21" width="7.6" height="7.6" fill="#004a97"/><rect x="1130.50" y="628.95" width="7.6" height="7.6" fill="#004a97"/><rect x="1139.20" y="628.95" width="7.6" height="7.6" fill="#004a97"/><rect x="1148.00" y="628.95" width="7.6" height="7.6" fill="#004a97"/><rect x="1156.70" y="628.95" width="7.6" height="7.6" fill="#004a97"/><rect x="1165.40" y="628.95" width="7.6" height="7.6" fill="#004a97"/><rect x="1130.50" y="637.68" width="7.6" height="7.6" fill="#004a97"/><rect x="1139.20" y="637.68" width="7.6" height="7.6" fill="#004a97"/><rect x="1148.00" y="637.68" width="7.6" height="7.6" fill="#004a97"/><rect x="1156.70" y="637.68" width="7.6" height="7.6" fill="#004a97"/><rect x="1165.40" y="637.68" width="7.6" height="7.6" fill="#004a97"/><rect x="1130.50" y="646.42" width="7.6" height="7.6" fill="#004a97"/><rect x="1139.20" y="646.42" width="7.6" height="7.6" fill="#004a97"/><rect x="1148.00" y="646.42" width="7.6" height="7.6" fill="#004a97"/><rect x="1156.70" y="646.42" width="7.6" height="7.6" fill="#004a97"/><rect x="1165.40" y="646.42" width="7.6" height="7.6" fill="#004a97"/><rect x="1130.50" y="655.15" width="7.6" height="7.6" fill="#004a97"/><rect x="1139.20" y="655.15" width="7.6" height="7.6" fill="#004a97"/><rect x="1148.00" y="655.15" width="7.6" height="7.6" fill="#004a97"/><rect x="1156.70" y="655.15" width="7.6" height="7.6" fill="#004a97"/><rect x="1165.40" y="655.15" width="7.6" height="7.6" fill="#004a97"/><rect x="1130.50" y="663.88" width="7.6" height="7.6" fill="#004a97"/><rect x="1139.20" y="663.88" width="7.6" height="7.6" fill="#004a97"/><rect x="1148.00" y="663.88" width="7.6" height="7.6" fill="#004a97"/><rect x="1156.70" y="663.88" width="7.6" height="7.6" fill="#004a97"/><rect x="1165.40" y="663.88" width="7.6" height="7.6" fill="#004a97"/><rect x="1130.50" y="672.62" width="7.6" height="7.6" fill="#004a97"/><rect x="1139.20" y="672.62" width="7.6" height="7.6" fill="#004a97"/><rect x="1148.00" y="672.62" width="7.6" height="7.6" fill="#004a97"/><rect x="1156.70" y="672.62" width="7.6" height="7.6" fill="#004a97"/><rect x="1165.40" y="672.62" width="7.6" height="7.6" fill="#004a97"/><rect x="1130.50" y="681.35" width="7.6" height="7.6" fill="#004a97"/><rect x="1139.20" y="681.35" width="7.6" height="7.6" fill="#004a97"/><rect x="1148.00" y="681.35" width="7.6" height="7.6" fill="#004a97"/><rect x="1156.70" y="681.35" width="7.6" height="7.6" fill="#004a97"/><rect x="1165.40" y="681.35" width="7.6" height="7.6" fill="#004a97"/><rect x="1130.50" y="690.09" width="7.6" height="7.6" fill="#004a97"/><rect x="1139.20" y="690.09" width="7.6" height="7.6" fill="#004a97"/><rect x="1148.00" y="690.09" width="7.6" height="7.6" fill="#004a97"/><rect x="1156.70" y="690.09" width="7.6" height="7.6" fill="#004a97"/><rect x="1165.40" y="690.09" width="7.6" height="7.6" fill="#004a97"/><rect x="1130.50" y="698.82" width="7.6" height="7.6" fill="#004a97"/><rect x="1139.20" y="698.82" width="7.6" height="7.6" fill="#004a97"/><rect x="1148.00" y="698.82" width="7.6" height="7.6" fill="#004a97"/><rect x="1156.70" y="698.82" width="7.6" height="7.6" fill="#004a97"/><rect x="1165.40" y="698.82" width="7.6" height="7.6" fill="#004a97"/><rect x="1130.50" y="707.55" width="7.6" height="7.6" fill="#004a97"/><rect x="1139.20" y="707.55" width="7.6" height="7.6" fill="#004a97"/><rect x="1148.00" y="707.55" width="7.6" height="7.6" fill="#004a97"/><rect x="1156.70" y="707.55" width="7.6" height="7.6" fill="#004a97"/><rect x="1165.40" y="707.55" width="7.6" height="7.6" fill="#004a97"/><rect x="1130.50" y="716.29" width="7.6" height="7.6" fill="#004a97"/><rect x="1139.20" y="716.29" width="7.6" height="7.6" fill="#004a97"/><rect x="1148.00" y="716.29" width="7.6" height="7.6" fill="#004a97"/><rect x="1156.70" y="716.29" width="7.6" height="7.6" fill="#004a97"/><rect x="1165.40" y="716.29" width="7.6" height="7.6" fill="#004a97"/><rect x="1130.50" y="725.02" width="7.6" height="7.6" fill="#004a97"/><rect x="1139.20" y="725.02" width="7.6" height="7.6" fill="#004a97"/><rect x="1148.00" y="725.02" width="7.6" height="7.6" fill="#004a97"/><rect x="1156.70" y="725.02" width="7.6" height="7.6" fill="#004a97"/><rect x="1165.40" y="725.02" width="7.6" height="7.6" fill="#004a97"/><rect x="1130.50" y="733.76" width="7.6" height="7.6" fill="#004a97"/><rect x="1139.20" y="733.76" width="7.6" height="7.6" fill="#004a97"/><rect x="1148.00" y="733.76" width="7.6" height="7.6" fill="#004a97"/><rect x="1156.70" y="733.76" width="7.6" height="7.6" fill="#004a97"/><rect x="1165.40" y="733.76" width="7.6" height="7.6" fill="#004a97"/><rect x="1130.50" y="742.49" width="7.6" height="7.6" fill="#004a97"/><rect x="1139.20" y="742.49" width="7.6" height="7.6" fill="#004a97"/><rect x="1148.00" y="742.49" width="7.6" height="7.6" fill="#004a97"/><rect x="1156.70" y="742.49" width="7.6" height="7.6" fill="#004a97"/><rect x="1165.40" y="742.49" width="7.6" height="7.6" fill="#004a97"/><rect x="1130.50" y="751.22" width="7.6" height="7.6" fill="#004a97"/><rect x="1139.20" y="751.22" width="7.6" height="7.6" fill="#004a97"/><rect x="1148.00" y="751.22" width="7.6" height="7.6" fill="#004a97"/><rect x="1156.70" y="751.22" width="7.6" height="7.6" fill="#004a97"/><rect x="1165.40" y="751.22" width="7.6" height="7.6" fill="#004a97"/><rect x="1130.50" y="759.96" width="7.6" height="7.6" fill="#004a97"/><rect x="1139.20" y="759.96" width="7.6" height="7.6" fill="#004a97"/><rect x="1148.00" y="759.96" width="7.6" height="7.6" fill="#004a97"/><rect x="1156.70" y="759.96" width="7.6" height="7.6" fill="#004a97"/><rect x="1165.40" y="759.96" width="7.6" height="7.6" fill="#004a97"/><rect x="1130.50" y="768.69" width="7.6" height="7.6" fill="#004a97"/><rect x="1139.20" y="768.69" width="7.6" height="7.6" fill="#004a97"/><rect x="1148.00" y="768.69" width="7.6" height="7.6" fill="#004a97"/><rect x="1156.70" y="768.69" width="7.6" height="7.6" fill="#004a97"/><rect x="1165.40" y="768.69" width="7.6" height="7.6" fill="#004a97"/><rect x="1130.50" y="777.43" width="7.6" height="7.6" fill="#004a97"/><rect x="1139.20" y="777.43" width="7.6" height="7.6" fill="#004a97"/><rect x="1148.00" y="777.43" width="7.6" height="7.6" fill="#004a97"/><rect x="1156.70" y="777.43" width="7.6" height="7.6" fill="#004a97"/><rect x="1165.40" y="777.43" width="7.6" height="7.6" fill="#004a97"/><rect x="1130.50" y="786.16" width="7.6" height="7.6" fill="#004a97"/><rect x="1139.20" y="786.16" width="7.6" height="7.6" fill="#004a97"/><rect x="1148.00" y="786.16" width="7.6" height="7.6" fill="#004a97"/><rect x="1156.70" y="786.16" width="7.6" height="7.6" fill="#004a97"/><rect x="1165.40" y="786.16" width="7.6" height="7.6" fill="#004a97"/><rect x="1130.50" y="794.89" width="7.6" height="7.6" fill="#004a97"/><rect x="1139.20" y="794.89" width="7.6" height="7.6" fill="#004a97"/><rect x="1148.00" y="794.89" width="7.6" height="7.6" fill="#004a97"/><rect x="1156.70" y="794.89" width="7.6" height="7.6" fill="#004a97"/><rect x="1165.40" y="794.89" width="7.6" height="7.6" fill="#004a97"/><rect x="1130.50" y="803.63" width="7.6" height="7.6" fill="#004a97"/><rect x="1139.20" y="803.63" width="7.6" height="7.6" fill="#004a97"/><rect x="1148.00" y="803.63" width="7.6" height="7.6" fill="#004a97"/><rect x="1156.70" y="803.63" width="7.6" height="7.6" fill="#004a97"/><rect x="1165.40" y="803.63" width="7.6" height="7.6" fill="#004a97"/><rect x="1130.50" y="812.36" width="7.6" height="7.6" fill="#004a97"/><rect x="1139.20" y="812.36" width="7.6" height="7.6" fill="#004a97"/><rect x="1148.00" y="812.36" width="7.6" height="7.6" fill="#004a97"/><rect x="1156.70" y="812.36" width="7.6" height="7.6" fill="#004a97"/><rect x="1165.40" y="812.36" width="7.6" height="7.6" fill="#004a97"/><rect x="1130.50" y="821.10" width="7.6" height="7.6" fill="#004a97"/><rect x="1139.20" y="821.10" width="7.6" height="7.6" fill="#004a97"/><rect x="1148.00" y="821.10" width="7.6" height="7.6" fill="#004a97"/><rect x="1156.70" y="821.10" width="7.6" height="7.6" fill="#004a97"/><rect x="1165.40" y="821.10" width="7.6" height="7.6" fill="#004a97"/><rect x="1130.50" y="829.83" width="7.6" height="7.6" fill="#004a97"/><rect x="1139.20" y="829.83" width="7.6" height="7.6" fill="#004a97"/><rect x="1148.00" y="829.83" width="7.6" height="7.6" fill="#004a97"/><rect x="1156.70" y="829.83" width="7.6" height="7.6" fill="#004a97"/><rect x="1165.40" y="829.83" width="7.6" height="7.6" fill="#004a97"/><rect x="1130.50" y="838.56" width="7.6" height="7.6" fill="#004a97"/><rect x="1139.20" y="838.56" width="7.6" height="7.6" fill="#004a97"/><rect x="1148.00" y="838.56" width="7.6" height="7.6" fill="#004a97"/><rect x="1156.70" y="838.56" width="7.6" height="7.6" fill="#004a97"/><rect x="1165.40" y="838.56" width="7.6" height="7.6" fill="#004a97"/><rect x="1130.50" y="847.30" width="7.6" height="7.6" fill="#004a97"/><rect x="1139.20" y="847.30" width="7.6" height="7.6" fill="#004a97"/><rect x="1148.00" y="847.30" width="7.6" height="7.6" fill="#004a97"/><rect x="1156.70" y="847.30" width="7.6" height="7.6" fill="#004a97"/><rect x="1165.40" y="847.30" width="7.6" height="7.6" fill="#004a97"/><rect x="1130.50" y="856.03" width="7.6" height="7.6" fill="#004a97"/><rect x="1139.20" y="856.03" width="7.6" height="7.6" fill="#004a97"/><rect x="1148.00" y="856.03" width="7.6" height="7.6" fill="#004a97"/><rect x="1156.70" y="856.03" width="7.6" height="7.6" fill="#004a97"/><rect x="1165.40" y="856.03" width="7.6" height="7.6" fill="#004a97"/><rect x="1130.50" y="864.77" width="7.6" height="7.6" fill="#004a97"/><rect x="1139.20" y="864.77" width="7.6" height="7.6" fill="#004a97"/><rect x="1148.00" y="864.77" width="7.6" height="7.6" fill="#004a97"/><rect x="1156.70" y="864.77" width="7.6" height="7.6" fill="#004a97"/><rect x="1165.40" y="864.77" width="7.6" height="7.6" fill="#004a97"/><rect x="1130.50" y="873.50" width="7.6" height="7.6" fill="#004a97"/><rect x="1139.20" y="873.50" width="7.6" height="7.6" fill="#004a97"/><rect x="1148.00" y="873.50" width="7.6" height="7.6" fill="#004a97"/><rect x="1156.70" y="873.50" width="7.6" height="7.6" fill="#004a97"/><rect x="1165.40" y="873.50" width="7.6" height="7.6" fill="#004a97"/><rect x="1130.50" y="882.23" width="7.6" height="7.6" fill="#004a97"/><rect x="1139.20" y="882.23" width="7.6" height="7.6" fill="#004a97"/><rect x="1148.00" y="882.23" width="7.6" height="7.6" fill="#004a97"/><rect x="1156.70" y="882.23" width="7.6" height="7.6" fill="#004a97"/><rect x="1165.40" y="882.23" width="7.6" height="7.6" fill="#004a97"/><rect x="1130.50" y="890.97" width="7.6" height="7.6" fill="#004a97"/><rect x="1139.20" y="890.97" width="7.6" height="7.6" fill="#004a97"/><rect x="1148.00" y="890.97" width="7.6" height="7.6" fill="#004a97"/><rect x="1156.70" y="890.97" width="7.6" height="7.6" fill="#004a97"/><rect x="1165.40" y="890.97" width="7.6" height="7.6" fill="#004a97"/><rect x="1130.50" y="899.70" width="7.6" height="7.6" fill="#004a97"/><rect x="1139.20" y="899.70" width="7.6" height="7.6" fill="#004a97"/><rect x="1148.00" y="899.70" width="7.6" height="7.6" fill="#004a97"/><rect x="1156.70" y="899.70" width="7.6" height="7.6" fill="#004a97"/><rect x="1165.40" y="899.70" width="7.6" height="7.6" fill="#004a97"/><rect x="1130.50" y="908.44" width="7.6" height="7.6" fill="#004a97"/><rect x="1139.20" y="908.44" width="7.6" height="7.6" fill="#004a97"/><rect x="1148.00" y="908.44" width="7.6" height="7.6" fill="#004a97"/><rect x="1156.70" y="908.44" width="7.6" height="7.6" fill="#004a97"/><rect x="1165.40" y="908.44" width="7.6" height="7.6" fill="#004a97"/><rect x="1130.50" y="917.17" width="7.6" height="7.6" fill="#004a97"/><rect x="1139.20" y="917.17" width="7.6" height="7.6" fill="#004a97"/><rect x="1148.00" y="917.17" width="7.6" height="7.6" fill="#004a97"/><rect x="1156.70" y="917.17" width="7.6" height="7.6" fill="#004a97"/><rect x="1165.40" y="917.17" width="7.6" height="7.6" fill="#004a97"/><rect x="1130.50" y="925.90" width="7.6" height="7.6" fill="#004a97"/><rect x="1139.20" y="925.90" width="7.6" height="7.6" fill="#004a97"/><rect x="1148.00" y="925.90" width="7.6" height="7.6" fill="#004a97"/><rect x="1156.70" y="925.90" width="7.6" height="7.6" fill="#004a97"/><rect x="1165.40" y="925.90" width="7.6" height="7.6" fill="#004a97"/><rect x="1130.50" y="934.64" width="7.6" height="7.6" fill="#004a97"/><rect x="1139.20" y="934.64" width="7.6" height="7.6" fill="#004a97"/><rect x="1148.00" y="934.64" width="7.6" height="7.6" fill="#004a97"/><rect x="1156.70" y="934.64" width="7.6" height="7.6" fill="#004a97"/><rect x="1165.40" y="934.64" width="7.6" height="7.6" fill="#004a97"/><rect x="1130.50" y="943.37" width="7.6" height="7.6" fill="#004a97"/><rect x="1139.20" y="943.37" width="7.6" height="7.6" fill="#004a97"/><rect x="1148.00" y="943.37" width="7.6" height="7.6" fill="#004a97"/><rect x="1156.70" y="943.37" width="7.6" height="7.6" fill="#004a97"/><rect x="1165.40" y="943.37" width="7.6" height="7.6" fill="#004a97"/><path d="M990 69a70 70 0 1 0 140 0a70 70 0 1 0 -140 0zM1023 69a37 37 0 1 1 74 0a37 37 0 1 1 -74 0z" fill="#fff" fill-rule="evenodd"/><polygon points="1085,70 1130,115 1105,139 1061,94" fill="#fff"/><rect x="1060" y="32" width="1" height="74" fill="#fff"/><rect x="1023" y="69" width="74" height="1" fill="#fff"/></svg>
<div class="t" style="left:1547px;top:81.11px;font-size:23.5px;color:#fff;font-weight:400;transform:scaleX(0.95);transform-origin:0 0;-webkit-text-stroke:0.9px #fff">CENTRÁLNÍ</div>
<div class="t" style="left:1547px;top:104.41px;font-size:23.5px;color:#fff;font-weight:400;transform:scaleX(0.95);transform-origin:0 0;-webkit-text-stroke:0.9px #fff">MOZEK</div>
<div class="t" style="left:1547px;top:127.71px;font-size:23.5px;color:#fff;font-weight:400;transform:scaleX(0.95);transform-origin:0 0;-webkit-text-stroke:0.9px #fff">FIRMY</div>
<div style="left:1678px;top:72px;width:2px;height:948px;background:#fff"></div>
<svg style="position:absolute;left:1250px;top:800px;" width="70" height="75" viewBox="0 0 70 75"><defs><linearGradient id="rf" x1="0" y1="0" x2="0" y2="1"><stop offset="0" stop-color="#6b8fc4" stop-opacity=".55"/><stop offset="1" stop-color="#004a97" stop-opacity="0"/></linearGradient></defs>
<rect x="18" y="60" width="43" height="10" fill="url(#rf)"/>
<path d="M20 7h37q3 0 3 3v38l-10 10h-27q-3 0-3-3z" fill="#cdcdcd" stroke="#9f9f9f" stroke-width="1.2"/>
<path d="M21 9h22" stroke="#fff" stroke-width="1.5"/>
<path d="M50 58l10-10h-7q-3 0-3 3z" fill="#fff" stroke="#a5a5a5" stroke-width="1"/>
<rect x="38" y="52" width="12" height="3" rx="1.5" fill="#a0a0a0"/>
<polygon points="4,33 22.5,14 22.5,23 39,23 39,42 22.5,42 22.5,51" fill="#f00a14"/></svg>
<div class="t" style="left:1216px;width:140px;text-align:center;top:876.69px;font-size:11px;color:#fff;font-weight:400;">Výdejny nářadí</div>
<svg style="position:absolute;left:1395px;top:793px;" width="72" height="62" viewBox="0 0 72 62"><defs><linearGradient id="rf2" x1="0" y1="0" x2="0" y2="1"><stop offset="0" stop-color="#6b8fc4" stop-opacity=".5"/><stop offset="1" stop-color="#004a97" stop-opacity="0"/></linearGradient></defs>
<rect x="36" y="51" width="33" height="10" fill="url(#rf2)"/><polygon points="5,53 20,53 26,61 8,61" fill="#8a4a8a" opacity=".18"/>
<g transform="translate(19.5 27) rotate(23) translate(-7.5 -22.5)"><rect x="0" y="0" width="15" height="45" rx="2" fill="#f20a14"/><rect x="3" y="6" width="9" height="17" rx="1.5" fill="#fff"/><path d="M7.5 9v11" stroke="#444" stroke-width="1.6" stroke-dasharray="1.2 1"/><circle cx="7.5" cy="37" r="4" fill="#333"/></g>
<rect x="36.5" y="3.5" width="15" height="47" rx="2" fill="#cdcdcd" stroke="#e5e5e5" stroke-width=".8"/><rect x="39" y="10" width="10" height="17" rx="1.5" fill="#fff"/><path d="M44 13v11" stroke="#444" stroke-width="1.6" stroke-dasharray="1.2 1"/><rect x="38" y="41" width="12" height="7" rx="2" fill="#a8a8a8"/><circle cx="44" cy="42.5" r="4" fill="#333"/>
<rect x="53" y="3.5" width="15" height="47" rx="2" fill="#a6a6a6" stroke="#c5c5c5" stroke-width=".8"/><rect x="55.5" y="10" width="10" height="17" rx="1.5" fill="#fff"/><path d="M60.5 13v11" stroke="#444" stroke-width="1.6" stroke-dasharray="1.2 1"/><rect x="54.5" y="41" width="12" height="7" rx="2" fill="#808080"/><circle cx="60.5" cy="42.5" r="4" fill="#333"/></svg>
<div class="t" style="left:1356px;width:140px;text-align:center;top:860.69px;font-size:11px;color:#fff;font-weight:400;">Přehled předepsané</div>
<div class="t" style="left:1356px;width:140px;text-align:center;top:873.69px;font-size:11px;color:#fff;font-weight:400;">údržby nářadí a m...</div>
<svg style="position:absolute;left:1575px;top:795px;" width="75" height="75" viewBox="0 0 75 75"><defs><linearGradient id="rf3" x1="0" y1="0" x2="0" y2="1"><stop offset="0" stop-color="#6b8fc4" stop-opacity=".45"/><stop offset="1" stop-color="#004a97" stop-opacity="0"/></linearGradient></defs>
<rect x="10" y="61" width="20" height="9" rx="4" fill="url(#rf3)"/><polygon points="52,61 64,61 64,68 46,68" fill="#3aa0a0" opacity=".15"/>
<path d="M20 49L51.5 17" stroke="#6e6e6e" stroke-width="8"/>
<circle cx="51.5" cy="17" r="10" fill="#6e6e6e"/><rect x="50" y="13" width="13" height="8" fill="#004a97"/>
<circle cx="19.5" cy="49" r="10" fill="#6e6e6e"/><rect x="8" y="45" width="12" height="8" fill="#004a97"/>
<polygon points="12,9 22,13.5 17.5,18" fill="#a5a5a5"/><path d="M19.5 15.5L35 31" stroke="#a8a8a8" stroke-width="3.5"/>
<path d="M35.5 31.5L57 53" stroke="#5cb85c" stroke-width="15"/><path d="M57 53L61 57" stroke="#6e6e6e" stroke-width="15"/>
<path d="M41.5 43.5l10 10M44.5 40.5l10 10M47.5 37.5l10 10" stroke="#6a6a6a" stroke-width="1.6"/>
<path d="M33 33q-2 4 3 8" fill="none" stroke="#fff" stroke-width="1.2"/></svg>
<div class="t" style="left:1540px;width:140px;text-align:center;top:871.69px;font-size:11px;color:#fff;font-weight:400;">Speciální nářadí a</div>
<div class="t" style="left:1540px;width:140px;text-align:center;top:884.69px;font-size:11px;color:#fff;font-weight:400;">přípravky</div>
<div style="left:386px;top:91px;width:829px;height:644px;background:#fff;border:1px solid #cfcfcf"></div>
<div style="left:387px;top:92px;width:827px;height:26px;background:#e9e9e9"></div>
<div style="left:386px;top:118px;width:829px;height:1px;background:#d5e0ec"></div>
<svg style="position:absolute;left:392px;top:96px;" width="16" height="18" viewBox="0 0 16 18"><polygon points="1,1 15,9 1,17" fill="#fff"/><path d="M4 13.5L12 9.5" stroke="#a5a5a5" stroke-width="1.4"/><path d="M2 2.5v3" stroke="#bbb" stroke-width=".8"/></svg>
<div class="t" style="left:411.5px;top:99.24px;font-size:12px;color:#434650;font-weight:700;">Speciální nářadí a přípravky</div>
<div class="t" style="left:1117px;top:100.27px;font-size:11.5px;color:#5b4a38;font-weight:700;">26</div>
<div style="left:1142px;top:105px;width:10px;height:1.3px;background:#111"></div>
<div style="left:1167px;top:101px;width:11px;height:11px;border:1.5px solid #111"></div>
<svg style="position:absolute;left:1192px;top:101px;" width="11" height="11" viewBox="0 0 11 11"><path d="M1 1L10 10M10 1L1 10" stroke="#111" stroke-width="2.4"/></svg>
<div style="left:398px;top:147px;width:665px;height:575px;background:#f7fbff;border:1px solid #c9daf3"></div>
<div style="left:448px;top:127px;width:45px;height:21px;background:#f7fbff;border:1px solid #c9daf3;border-bottom:none"></div>
<div class="t" style="left:405.5px;top:133.48px;font-size:10.3px;color:#1a1a1a;font-weight:400;">Seznam</div>
<div class="t" style="left:455.5px;top:132.98px;font-size:10.3px;color:#1a1a1a;font-weight:400;">Detail</div>
<div class="t" style="left:498.5px;top:133.48px;font-size:10.3px;color:#1a1a1a;font-weight:400;">Popis</div>
<div class="t" style="left:538px;top:133.48px;font-size:10.3px;color:#1a1a1a;font-weight:400;">Poznámka</div>
<div class="t" style="left:409px;top:161.26px;font-size:10.8px;color:#1a1a1a;font-weight:400;">Katalogový kód nářadí</div>
<div class="t" style="left:537px;top:161.26px;font-size:10.8px;color:#1a1a1a;font-weight:400;">Katalogový interní kód nářadí</div>
<div class="t" style="left:697px;top:161.26px;font-size:10.8px;color:#1a1a1a;font-weight:400;">Katalogový název nářadí</div>
<div style="left:411px;top:177px;width:118px;height:19px;background:#d6f7bf;border:1px solid #c4d5ef"></div>
<div style="left:511px;top:178px;width:17px;height:17px;background:#fff"></div>
<div style="left:514.5px;top:185.5px;width:2.5px;height:2.5px;background:#111"></div>
<div style="left:518.5px;top:185.5px;width:2.5px;height:2.5px;background:#111"></div>
<div style="left:522.5px;top:185.5px;width:2.5px;height:2.5px;background:#111"></div>
<div style="left:412px;top:178px;width:99px;height:17px;overflow:hidden;">
<div class="t" style="left:1px;top:3.14px;font-size:10.7px;color:#111;font-weight:400;">S-ODVZ</div>
</div>
<div style="left:539px;top:177px;width:149px;height:19px;background:#fff;border:1px solid #c4d5ef"></div>
<div style="left:670px;top:178px;width:17px;height:17px;background:#fff"></div>
<div style="left:673.5px;top:185.5px;width:2.5px;height:2.5px;background:#111"></div>
<div style="left:677.5px;top:185.5px;width:2.5px;height:2.5px;background:#111"></div>
<div style="left:681.5px;top:185.5px;width:2.5px;height:2.5px;background:#111"></div>
<div style="left:698px;top:177px;width:352px;height:19px;background:#fff;border:1px solid #c4d5ef"></div>
<div style="left:1032px;top:178px;width:17px;height:17px;background:#fff"></div>
<div style="left:1035.5px;top:185.5px;width:2.5px;height:2.5px;background:#111"></div>
<div style="left:1039.5px;top:185.5px;width:2.5px;height:2.5px;background:#111"></div>
<div style="left:1043.5px;top:185.5px;width:2.5px;height:2.5px;background:#111"></div>
<div style="left:699px;top:178px;width:333px;height:17px;overflow:hidden;">
<div class="t" style="left:1px;top:3.14px;font-size:10.7px;color:#111;font-weight:400;">Odvzdušňovací sada</div>
</div>
<div class="t" style="left:409px;top:204.26px;font-size:10.8px;color:#1a1a1a;font-weight:400;">Kód nářadí</div>
<div class="t" style="left:537px;top:204.26px;font-size:10.8px;color:#1a1a1a;font-weight:400;">Název nářadí</div>
<div style="left:411px;top:220px;width:118px;height:19px;background:#d6f7bf;border:1px solid #c4d5ef"></div>
<div style="left:412px;top:221px;width:116px;height:17px;overflow:hidden;">
<div class="t" style="left:1px;top:3.14px;font-size:10.7px;color:#111;font-weight:400;">S-ODVZ2</div>
</div>
<div style="left:539px;top:220px;width:511px;height:19px;background:#d6f7bf;border:1px solid #c4d5ef"></div>
<div style="left:540px;top:221px;width:509px;height:17px;overflow:hidden;">
<div class="t" style="left:1px;top:3.14px;font-size:10.7px;color:#111;font-weight:400;">Odvzdušňovací sada</div>
</div>
<div class="t" style="left:409px;top:248.26px;font-size:10.8px;color:#1a1a1a;font-weight:400;">Výrobní číslo</div>
<div class="t" style="left:537px;top:248.26px;font-size:10.8px;color:#1a1a1a;font-weight:400;">Evidenční číslo</div>
<div class="t" style="left:665px;top:248.26px;font-size:10.8px;color:#1a1a1a;font-weight:400;">Katalogové číslo výkresu</div>
<div style="left:411px;top:264px;width:118px;height:19px;background:#d6f7bf;border:1px solid #c4d5ef"></div>
<div style="left:412px;top:265px;width:116px;height:17px;overflow:hidden;">
<div class="t" style="left:1px;top:3.14px;font-size:10.7px;color:#111;font-weight:400;">127878</div>
</div>
<div style="left:539px;top:264px;width:118px;height:19px;background:#fff;border:1px solid #c4d5ef"></div>
<div style="left:667px;top:264px;width:118px;height:19px;background:#dde8fa;border:1px solid #c4d5ef"></div>
<div class="t" style="left:409px;top:292.26px;font-size:10.8px;color:#1a1a1a;font-weight:400;">Životnost (cykly)</div>
<div class="t" style="left:537px;top:292.26px;font-size:10.8px;color:#1a1a1a;font-weight:400;">Aktuální stav (cykly)</div>
<div class="t" style="left:665px;top:292.26px;font-size:10.8px;color:#1a1a1a;font-weight:400;">Zbývající cykly</div>
<div class="t" style="left:793px;top:292.26px;font-size:10.8px;color:#1a1a1a;font-weight:400;">MJ cyklu</div>
<div style="left:411px;top:308px;width:118px;height:19px;background:#fff;border:1px solid #c4d5ef"></div>
<div class="t" style="left:-73px;width:600px;text-align:right;top:312.14px;font-size:10.7px;color:#111;font-weight:400;">12000</div>
<div style="left:539px;top:308px;width:118px;height:19px;background:#dde8fa;border:1px solid #c4d5ef"></div>
<div style="left:667px;top:308px;width:118px;height:19px;background:#dde8fa;border:1px solid #c4d5ef"></div>
<div style="left:668px;top:309px;width:116px;height:17px;overflow:hidden;">
<div class="t" style="left:1px;top:3.14px;font-size:10.7px;color:#111;font-weight:400;">12000</div>
</div>
<div style="left:795px;top:308px;width:78px;height:19px;background:#fff;border:1px solid #c4d5ef"></div>
<div style="left:855px;top:309px;width:17px;height:17px;background:#fff"></div>
<div style="left:858.5px;top:316.5px;width:2.5px;height:2.5px;background:#111"></div>
<div style="left:862.5px;top:316.5px;width:2.5px;height:2.5px;background:#111"></div>
<div style="left:866.5px;top:316.5px;width:2.5px;height:2.5px;background:#111"></div>
<div style="left:796px;top:309px;width:59px;height:17px;overflow:hidden;">
<div class="t" style="left:1px;top:3.14px;font-size:10.7px;color:#111;font-weight:400;">min</div>
</div>
<div class="t" style="left:409px;top:332.26px;font-size:10.8px;color:#1a1a1a;font-weight:400;">Životnost (Nh)</div>
<div class="t" style="left:537px;top:332.26px;font-size:10.8px;color:#1a1a1a;font-weight:400;">Aktuální stav (Nh)</div>
<div class="t" style="left:665px;top:332.26px;font-size:10.8px;color:#1a1a1a;font-weight:400;">Zbývající normohodiny</div>
<div style="left:411px;top:348px;width:118px;height:19px;background:#fff;border:1px solid #c4d5ef"></div>
<div class="t" style="left:-73px;width:600px;text-align:right;top:352.14px;font-size:10.7px;color:#111;font-weight:400;">200</div>
<div style="left:539px;top:348px;width:118px;height:19px;background:#dde8fa;border:1px solid #c4d5ef"></div>
<div style="left:667px;top:348px;width:118px;height:19px;background:#dde8fa;border:1px solid #c4d5ef"></div>
<div class="t" style="left:183px;width:600px;text-align:right;top:352.14px;font-size:10.7px;color:#111;font-weight:400;">200,00</div>
<div class="t" style="left:409px;top:380.26px;font-size:10.8px;color:#1a1a1a;font-weight:400;">Rozměr 1</div>
<div class="t" style="left:537px;top:380.26px;font-size:10.8px;color:#1a1a1a;font-weight:400;">Rozměr 2</div>
<div class="t" style="left:665px;top:380.26px;font-size:10.8px;color:#1a1a1a;font-weight:400;">Rozměr 3</div>
<div class="t" style="left:793px;top:380.26px;font-size:10.8px;color:#1a1a1a;font-weight:400;">Hmotnost</div>
<div style="left:411px;top:396px;width:118px;height:19px;background:#dde8fa;border:1px solid #c4d5ef"></div>
<div style="left:539px;top:396px;width:118px;height:19px;background:#dde8fa;border:1px solid #c4d5ef"></div>
<div style="left:667px;top:396px;width:118px;height:19px;background:#dde8fa;border:1px solid #c4d5ef"></div>
<div style="left:795px;top:396px;width:118px;height:19px;background:#dde8fa;border:1px solid #c4d5ef"></div>
<div class="t" style="left:409px;top:423.76px;font-size:10.8px;color:#1a1a1a;font-weight:400;">Datum</div>
<div style="left:411px;top:439px;width:118px;height:19px;background:#fff;border:1px solid #c4d5ef"></div>
<div style="left:412px;top:440px;width:116px;height:17px;overflow:hidden;">
<div class="t" style="left:1px;top:3.14px;font-size:10.7px;color:#111;font-weight:400;">1</div>
</div>
<div style="left:1075px;top:147px;width:128px;height:22px;background:#4f87b7"></div>
<div class="t" style="left:1075px;width:128px;text-align:center;top:154.04px;font-size:10.7px;color:#fff;font-weight:400;">Přílohy</div>
<div style="left:1075px;top:175px;width:128px;height:22px;background:#4f87b7"></div>
<div class="t" style="left:1075px;width:128px;text-align:center;top:182.04px;font-size:10.7px;color:#fff;font-weight:400;">Zobr. katal. položky</div>
<div style="left:1075px;top:203px;width:128px;height:22px;background:#4f87b7"></div>
<div class="t" style="left:1075px;width:128px;text-align:center;top:210.04px;font-size:10.7px;color:#fff;font-weight:400;">Stavy na skladech</div>
<div style="left:888px;top:229px;width:783px;height:520px;background:#fff;border:1px solid #cfcfcf"></div>
<div style="left:889px;top:230px;width:781px;height:26px;background:#e9e9e9"></div>
<div style="left:888px;top:256px;width:783px;height:1px;background:#d5e0ec"></div>
<svg style="position:absolute;left:894px;top:234px;" width="16" height="18" viewBox="0 0 16 18"><polygon points="1,1 15,9 1,17" fill="#fff"/><path d="M4 13.5L12 9.5" stroke="#a5a5a5" stroke-width="1.4"/><path d="M2 2.5v3" stroke="#bbb" stroke-width=".8"/></svg>
<div class="t" style="left:913.5px;top:237.24px;font-size:12px;color:#434650;font-weight:700;">Předepsaná údržba</div>
<div class="t" style="left:1583px;top:238.27px;font-size:11.5px;color:#5b4a38;font-weight:700;">1</div>
<div style="left:1598px;top:243px;width:10px;height:1.3px;background:#111"></div>
<div style="left:1623px;top:239px;width:11px;height:11px;border:1.5px solid #111"></div>
<svg style="position:absolute;left:1648px;top:239px;" width="11" height="11" viewBox="0 0 11 11"><path d="M1 1L10 10M10 1L1 10" stroke="#111" stroke-width="2.4"/></svg>
<div class="t" style="left:899px;top:267.26px;font-size:10.8px;color:#1a1a1a;font-weight:400;">Identifikátor statku</div>
<div class="t" style="left:1063px;top:267.26px;font-size:10.8px;color:#1a1a1a;font-weight:400;">Název statku</div>
<div class="t" style="left:1523px;top:267.26px;font-size:10.8px;color:#1a1a1a;font-weight:400;">Výrobní číslo</div>
<div style="left:900px;top:283px;width:155px;height:19px;background:#dde8fa;border:1px solid #c4d5ef"></div>
<div style="left:901px;top:284px;width:153px;height:17px;overflow:hidden;">
<div class="t" style="left:1px;top:3.14px;font-size:10.7px;color:#111;font-weight:400;">S-ODVZ2</div>
</div>
<div style="left:1064px;top:283px;width:451px;height:19px;background:#dde8fa;border:1px solid #c4d5ef"></div>
<div style="left:1065px;top:284px;width:449px;height:17px;overflow:hidden;">
<div class="t" style="left:1px;top:3.14px;font-size:10.7px;color:#111;font-weight:400;">Odvzdušňovací sada</div>
</div>
<div style="left:1525px;top:283px;width:134px;height:19px;background:#dde8fa;border:1px solid #c4d5ef"></div>
<div style="left:1526px;top:284px;width:132px;height:17px;overflow:hidden;">
<div class="t" style="left:1px;top:3.14px;font-size:10.7px;color:#111;font-weight:400;">127878</div>
</div>
<div style="left:900px;top:329px;width:620px;height:404px;background:#f7fbff;border:1px solid #c9daf3"></div>
<div style="left:900px;top:309px;width:53px;height:21px;background:#f7fbff;border:1px solid #c9daf3;border-bottom:none"></div>
<div class="t" style="left:907.5px;top:314.78px;font-size:10.3px;color:#1a1a1a;font-weight:400;">Seznam</div>
<div class="t" style="left:957.5px;top:315.28px;font-size:10.3px;color:#1a1a1a;font-weight:400;">Detail</div>
<div class="t" style="left:1000.5px;top:315.28px;font-size:10.3px;color:#1a1a1a;font-weight:400;">Popis</div>
<div style="left:913px;top:342px;width:594px;height:378px;background:#f7fbff;border:1px solid #c9daf3"></div>
<div style="left:914px;top:343px;width:592px;height:36px;background:linear-gradient(#ffffff,#e9eff6)"></div>
<div style="left:1104px;top:343px;width:1px;height:36px;background:#dde7f2"></div>
<div style="left:1171px;top:343px;width:1px;height:36px;background:#dde7f2"></div>
<div style="left:1245px;top:343px;width:1px;height:36px;background:#dde7f2"></div>
<div style="left:1329px;top:343px;width:1px;height:36px;background:#dde7f2"></div>
<div style="left:1421px;top:343px;width:1px;height:36px;background:#dde7f2"></div>
<div style="left:1486px;top:343px;width:1px;height:36px;background:#dde7f2"></div>
<div style="left:914px;top:343px;width:592px;height:36px;overflow:hidden;">
<div class="t" style="left:2.5px;top:3.69px;font-size:11px;color:#1a1a1a;font-weight:400;">Název procesu</div>
<div class="t" style="left:193.5px;top:3.69px;font-size:11px;color:#1a1a1a;font-weight:400;">Perioda</div>
<div class="t" style="left:193.5px;top:17.19px;font-size:11px;color:#1a1a1a;font-weight:400;">(cykly/Nh)</div>
<div class="t" style="left:260.5px;top:3.69px;font-size:11px;color:#1a1a1a;font-weight:400;">MJ periody</div>
<div class="t" style="left:260.5px;top:17.19px;font-size:11px;color:#1a1a1a;font-weight:400;">(cykly/Nh)</div>
<div class="t" style="left:334.5px;top:3.69px;font-size:11px;color:#1a1a1a;font-weight:400;">Zbývá do konce</div>
<div class="t" style="left:334.5px;top:17.19px;font-size:11px;color:#1a1a1a;font-weight:400;">periody</div>
<div class="t" style="left:418.5px;top:3.69px;font-size:11px;color:#1a1a1a;font-weight:400;">Datum příštího</div>
<div class="t" style="left:418.5px;top:17.19px;font-size:11px;color:#1a1a1a;font-weight:400;">provedení</div>
<div class="t" style="left:510px;top:3.69px;font-size:11px;color:#1a1a1a;font-weight:400;">Čas procesu</div>
<div class="t" style="left:575.5px;top:3.69px;font-size:11px;color:#1a1a1a;font-weight:400;">MJ</div>
<div class="t" style="left:575.5px;top:17.19px;font-size:11px;color:#1a1a1a;font-weight:400;">č...</div>
</div>
<div style="left:914px;top:379px;width:592px;height:18px;background:#0c4a6e"></div>
<div style="left:1104px;top:379px;width:1px;height:18px;background:#6d93ad"></div>
<div style="left:1171px;top:379px;width:1px;height:18px;background:#6d93ad"></div>
<div style="left:1245px;top:379px;width:1px;height:18px;background:#6d93ad"></div>
<div style="left:1329px;top:379px;width:1px;height:18px;background:#6d93ad"></div>
<div style="left:1421px;top:379px;width:1px;height:18px;background:#6d93ad"></div>
<div style="left:1486px;top:379px;width:1px;height:18px;background:#6d93ad"></div>
<div style="left:914px;top:379px;width:592px;height:18px;overflow:hidden;">
<div class="t" style="left:2.5px;top:3.69px;font-size:11px;color:#fff;font-weight:400;">Výměna hadiček odvzdušňovací sady</div>
<div class="t" style="left:-347px;width:600px;text-align:right;top:3.69px;font-size:11px;color:#fff;font-weight:400;">1000</div>
<div class="t" style="left:260px;top:3.69px;font-size:11px;color:#fff;font-weight:400;">min</div>
<div class="t" style="left:-188px;width:600px;text-align:right;top:3.69px;font-size:11px;color:#fff;font-weight:400;">1 000,00</div>
<div class="t" style="left:418px;top:3.69px;font-size:11px;color:#fff;font-weight:400;">31.01.2013</div>
<div class="t" style="left:-31px;width:600px;text-align:right;top:3.69px;font-size:11px;color:#fff;font-weight:400;">5,0000</div>
<div class="t" style="left:574px;top:3.69px;font-size:11px;color:#fff;font-weight:400;">min</div>
</div>
<div style="left:914px;top:702px;width:592px;height:17px;background:#f1f5f9"></div>
<svg style="position:absolute;left:1493px;top:705px;" width="8" height="10" viewBox="0 0 8 10"><path d="M2 1.5L6 5L2 8.5" fill="none" stroke="#111" stroke-width="2"/></svg>
<div style="left:1532px;top:329px;width:128px;height:22px;background:#4f87b7"></div>
<div class="t" style="left:1532px;width:128px;text-align:center;top:336.04px;font-size:10.7px;color:#fff;font-weight:400;">Členění procesu</div>
<div style="left:1532px;top:365px;width:128px;height:22px;background:#4f87b7"></div>
<div class="t" style="left:1532px;width:128px;text-align:center;top:372.04px;font-size:10.7px;color:#fff;font-weight:400;">Generovat hromadně</div>
<div style="left:1532px;top:393px;width:128px;height:22px;background:#4f87b7"></div>
<div class="t" style="left:1532px;width:128px;text-align:center;top:400.04px;font-size:10.7px;color:#fff;font-weight:400;">Tvorba hrom. údržby</div>
<div style="left:1532px;top:421px;width:128px;height:22px;background:#4f87b7"></div>
<div class="t" style="left:1532px;width:128px;text-align:center;top:428.04px;font-size:10.7px;color:#fff;font-weight:400;">Servisní zásahy</div>
<div style="left:1532px;top:449px;width:128px;height:22px;background:#4f87b7"></div>
<div class="t" style="left:1532px;width:128px;text-align:center;top:456.04px;font-size:10.7px;color:#8fb2d2;font-weight:400;">Přeplánování zásahů</div>
<div style="left:1532px;top:485px;width:128px;height:22px;background:#4f87b7"></div>
<div class="t" style="left:1532px;width:128px;text-align:center;top:492.04px;font-size:10.7px;color:#fff;font-weight:400;">Smlouvy</div>
<div style="left:1532px;top:715px;width:128px;height:22px;background:#4f87b7"></div>
<div class="t" style="left:1532px;width:128px;text-align:center;top:722.04px;font-size:10.7px;color:#fff;font-weight:400;">Tisk</div>
<div style="left:420px;top:416px;width:803px;height:587px;background:#fff;border:1px solid #cfcfcf"></div>
<div style="left:421px;top:417px;width:801px;height:26px;background:#e9e9e9"></div>
<div style="left:420px;top:443px;width:803px;height:1px;background:#d5e0ec"></div>
<svg style="position:absolute;left:426px;top:421px;" width="16" height="18" viewBox="0 0 16 18"><polygon points="1,1 15,9 1,17" fill="#fff"/><path d="M4 13.5L12 9.5" stroke="#a5a5a5" stroke-width="1.4"/><path d="M2 2.5v3" stroke="#bbb" stroke-width=".8"/></svg>
<div class="t" style="left:445.5px;top:424.24px;font-size:12px;color:#434650;font-weight:700;">Servisní zásahy</div>
<div class="t" style="left:1135px;top:425.27px;font-size:11.5px;color:#5b4a38;font-weight:700;">1</div>
<div style="left:1150px;top:430px;width:10px;height:1.3px;background:#111"></div>
<div style="left:1175px;top:426px;width:11px;height:11px;border:1.5px solid #111"></div>
<svg style="position:absolute;left:1200px;top:426px;" width="11" height="11" viewBox="0 0 11 11"><path d="M1 1L10 10M10 1L1 10" stroke="#111" stroke-width="2.4"/></svg>
<div style="left:432px;top:472px;width:639px;height:522px;background:#f7fbff;border:1px solid #c9daf3"></div>
<div style="left:482px;top:452px;width:45px;height:21px;background:#f7fbff;border:1px solid #c9daf3;border-bottom:none"></div>
<div class="t" style="left:439px;top:458.28px;font-size:10.3px;color:#1a1a1a;font-weight:400;">Seznam</div>
<div class="t" style="left:489px;top:457.78px;font-size:10.3px;color:#1a1a1a;font-weight:400;">Detail</div>
<div class="t" style="left:530.5px;top:458.28px;font-size:10.3px;color:#1a1a1a;font-weight:400;">Místo konání</div>
<div class="t" style="left:601.5px;top:458.28px;font-size:10.3px;color:#1a1a1a;font-weight:400;">Popis servisního zásahu</div>
<div class="t" style="left:727px;top:458.28px;font-size:10.3px;color:#1a1a1a;font-weight:400;">Zápis servisního zásahu</div>
<div class="t" style="left:443.5px;top:486.76px;font-size:10.8px;color:#1a1a1a;font-weight:400;">Název servisního zásahu</div>
<div class="t" style="left:762.5px;top:486.76px;font-size:10.8px;color:#1a1a1a;font-weight:400;">Druh servisního zásahu</div>
<div class="t" style="left:914.5px;top:486.76px;font-size:10.8px;color:#1a1a1a;font-weight:400;">Datum zaevidování</div>
<div style="left:445px;top:502px;width:309px;height:19px;background:#d6f7bf;border:1px solid #c4d5ef"></div>
<div style="left:446px;top:503px;width:307px;height:17px;overflow:hidden;">
<div class="t" style="left:1px;top:3.14px;font-size:10.7px;color:#111;font-weight:400;">Výměna hadiček odvzdušňovací sady</div>
</div>
<div style="left:764px;top:502px;width:142px;height:19px;background:#fff;border:1px solid #c4d5ef"></div>
<div style="left:888px;top:503px;width:17px;height:17px;background:#fff"></div>
<div style="left:891.5px;top:510.5px;width:2.5px;height:2.5px;background:#111"></div>
<div style="left:895.5px;top:510.5px;width:2.5px;height:2.5px;background:#111"></div>
<div style="left:899.5px;top:510.5px;width:2.5px;height:2.5px;background:#111"></div>
<div style="left:916px;top:502px;width:142px;height:19px;background:#fff;border:1px solid #c4d5ef"></div>
<div style="left:1040px;top:503px;width:17px;height:17px;background:#fff"></div>
<svg style="position:absolute;left:1043px;top:508.0px;" width="10" height="8" viewBox="0 0 10 8"><path d="M1.5 2L5 5.5L8.5 2" fill="none" stroke="#111" stroke-width="2"/></svg>
<div style="left:917px;top:503px;width:123px;height:17px;overflow:hidden;">
<div class="t" style="left:1px;top:3.14px;font-size:10.7px;color:#111;font-weight:400;">27.06.2018 13:21:58</div>
</div>
<div class="t" style="left:443.5px;top:530.26px;font-size:10.8px;color:#1a1a1a;font-weight:400;">Zodpovědná osoba</div>
<div class="t" style="left:595.5px;top:530.26px;font-size:10.8px;color:#1a1a1a;font-weight:400;">Zadavatel</div>
<div class="t" style="left:762.5px;top:530.26px;font-size:10.8px;color:#1a1a1a;font-weight:400;">Týká se subjektu</div>
<div class="t" style="left:914.5px;top:530.26px;font-size:10.8px;color:#1a1a1a;font-weight:400;">Stav akce</div>
<div style="left:445px;top:545px;width:142px;height:19px;background:#fff;border:1px solid #c4d5ef"></div>
<div style="left:569px;top:546px;width:17px;height:17px;background:#fff"></div>
<div style="left:572.5px;top:553.5px;width:2.5px;height:2.5px;background:#111"></div>
<div style="left:576.5px;top:553.5px;width:2.5px;height:2.5px;background:#111"></div>
<div style="left:580.5px;top:553.5px;width:2.5px;height:2.5px;background:#111"></div>
<div style="left:446px;top:546px;width:123px;height:17px;overflow:hidden;">
<div class="t" style="left:1px;top:3.14px;font-size:10.7px;color:#111;font-weight:400;">Kaláb Michal</div>
</div>
<div style="left:597px;top:545px;width:157px;height:19px;background:#fff;border:1px solid #c4d5ef"></div>
<div style="left:736px;top:546px;width:17px;height:17px;background:#fff"></div>
<div style="left:739.5px;top:553.5px;width:2.5px;height:2.5px;background:#111"></div>
<div style="left:743.5px;top:553.5px;width:2.5px;height:2.5px;background:#111"></div>
<div style="left:747.5px;top:553.5px;width:2.5px;height:2.5px;background:#111"></div>
<div style="left:598px;top:546px;width:138px;height:17px;overflow:hidden;">
<div class="t" style="left:1px;top:3.14px;font-size:10.7px;color:#111;font-weight:400;">Plocek Rudolf</div>
</div>
<div style="left:764px;top:545px;width:142px;height:19px;background:#fff;border:1px solid #c4d5ef"></div>
<div style="left:888px;top:546px;width:17px;height:17px;background:#fff"></div>
<div style="left:891.5px;top:553.5px;width:2.5px;height:2.5px;background:#111"></div>
<div style="left:895.5px;top:553.5px;width:2.5px;height:2.5px;background:#111"></div>
<div style="left:899.5px;top:553.5px;width:2.5px;height:2.5px;background:#111"></div>
<div style="left:916px;top:545px;width:142px;height:19px;background:#fff;border:1px solid #c4d5ef"></div>
<div style="left:1040px;top:546px;width:17px;height:17px;background:#fff"></div>
<svg style="position:absolute;left:1043px;top:551.0px;" width="10" height="8" viewBox="0 0 10 8"><path d="M1.5 2L5 5.5L8.5 2" fill="none" stroke="#111" stroke-width="2"/></svg>
<div style="left:917px;top:546px;width:123px;height:17px;overflow:hidden;">
<div class="t" style="left:1px;top:3.14px;font-size:10.7px;color:#111;font-weight:400;">Připraveno</div>
</div>
<div style="left:444px;top:572px;width:615px;height:408px;background:#f7fbff;border:1px solid #c9daf3"></div>
<div style="left:452px;top:580px;width:297px;height:391px;background:#f7fbff;border:1px solid #c9daf3"></div>
<div style="left:756px;top:580px;width:295px;height:391px;background:#f7fbff;border:1px solid #c9daf3"></div>
<div style="left:453px;top:581px;width:272px;height:384px;overflow:hidden;">
<div style="left:6.5px;top:12.46px;width:157px;height:17.8px;display:flex;align-items:flex-start;overflow:hidden"><span style="white-space:pre;line-height:1;font-size:10.8px;color:#1a1a1a;margin-top:4px">Kód servisního zásahu</span><span style="flex:1;min-width:0;height:2px;margin:11.14px 0 0 7px;background:repeating-linear-gradient(to left,#222 0 1px,transparent 1px 7px)"></span></div>
<div style="left:178px;top:8px;width:91px;height:19px;background:#fff;border:1px solid #c4d5ef"></div>
<div style="left:179px;top:9px;width:89px;height:17px;overflow:hidden;">
<div class="t" style="left:1px;top:3.14px;font-size:10.7px;color:#111;font-weight:400;">S-VYHADO</div>
</div>
<div style="left:6.5px;top:36.46px;width:157px;height:17.8px;display:flex;align-items:flex-start;overflow:hidden"><span style="white-space:pre;line-height:1;font-size:10.8px;color:#1a1a1a;margin-top:4px">Typ servisního zásahu</span><span style="flex:1;min-width:0;height:2px;margin:11.14px 0 0 7px;background:repeating-linear-gradient(to left,#222 0 1px,transparent 1px 7px)"></span></div>
<div style="left:178px;top:32px;width:91px;height:19px;background:#dde8fa;border:1px solid #c4d5ef"></div>
<div style="left:179px;top:33px;width:89px;height:17px;overflow:hidden;">
<div class="t" style="left:1px;top:3.14px;font-size:10.7px;color:#111;font-weight:400;">Předepsaná údržba</div>
</div>
<div style="left:6.5px;top:60.46px;width:157px;height:17.8px;display:flex;align-items:flex-start;overflow:hidden"><span style="white-space:pre;line-height:1;font-size:10.8px;color:#1a1a1a;margin-top:4px">Plánovaný čas zahájení</span><span style="flex:1;min-width:0;height:2px;margin:11.14px 0 0 7px;background:repeating-linear-gradient(to left,#222 0 1px,transparent 1px 7px)"></span></div>
<div style="left:178px;top:56px;width:91px;height:19px;background:#fff;border:1px solid #c4d5ef"></div>
<div style="left:251px;top:57px;width:17px;height:17px;background:#fff"></div>
<svg style="position:absolute;left:254px;top:62.0px;" width="10" height="8" viewBox="0 0 10 8"><path d="M1.5 2L5 5.5L8.5 2" fill="none" stroke="#111" stroke-width="2"/></svg>
<div style="left:179px;top:57px;width:72px;height:17px;overflow:hidden;">
<div class="t" style="left:1px;top:3.14px;font-size:10.7px;color:#111;font-weight:400;">27.06.2018</div>
</div>
<div style="left:6.5px;top:84.46px;width:157px;height:17.8px;display:flex;align-items:flex-start;overflow:hidden"><span style="white-space:pre;line-height:1;font-size:10.8px;color:#1a1a1a;margin-top:4px">Plánovaný čas ukončení</span><span style="flex:1;min-width:0;height:2px;margin:11.14px 0 0 7px;background:repeating-linear-gradient(to left,#222 0 1px,transparent 1px 7px)"></span></div>
<div style="left:178px;top:80px;width:91px;height:19px;background:#fff;border:1px solid #c4d5ef"></div>
<div style="left:251px;top:81px;width:17px;height:17px;background:#fff"></div>
<svg style="position:absolute;left:254px;top:86.0px;" width="10" height="8" viewBox="0 0 10 8"><path d="M1.5 2L5 5.5L8.5 2" fill="none" stroke="#111" stroke-width="2"/></svg>
<div style="left:179px;top:81px;width:72px;height:17px;overflow:hidden;">
<div class="t" style="left:1px;top:3.14px;font-size:10.7px;color:#111;font-weight:400;">27.06.2018 0:00</div>
</div>
<div style="left:6.5px;top:108.46px;width:157px;height:17.8px;display:flex;align-items:flex-start;overflow:hidden"><span style="white-space:pre;line-height:1;font-size:10.8px;color:#1a1a1a;margin-top:4px">Čas zahájení</span><span style="flex:1;min-width:0;height:2px;margin:11.14px 0 0 7px;background:repeating-linear-gradient(to left,#222 0 1px,transparent 1px 7px)"></span></div>
<div style="left:178px;top:104px;width:91px;height:19px;background:#fff;border:1px solid #c4d5ef"></div>
<div style="left:251px;top:105px;width:17px;height:17px;background:#fff"></div>
<svg style="position:absolute;left:254px;top:110.0px;" width="10" height="8" viewBox="0 0 10 8"><path d="M1.5 2L5 5.5L8.5 2" fill="none" stroke="#111" stroke-width="2"/></svg>
<div style="left:6.5px;top:132.46px;width:157px;height:17.8px;display:flex;align-items:flex-start;overflow:hidden"><span style="white-space:pre;line-height:1;font-size:10.8px;color:#1a1a1a;margin-top:4px">Čas ukončení</span><span style="flex:1;min-width:0;height:2px;margin:11.14px 0 0 7px;background:repeating-linear-gradient(to left,#222 0 1px,transparent 1px 7px)"></span></div>
<div style="left:178px;top:128px;width:91px;height:19px;background:#fff;border:1px solid #c4d5ef"></div>
<div style="left:251px;top:129px;width:17px;height:17px;background:#fff"></div>
<svg style="position:absolute;left:254px;top:134.0px;" width="10" height="8" viewBox="0 0 10 8"><path d="M1.5 2L5 5.5L8.5 2" fill="none" stroke="#111" stroke-width="2"/></svg>
<div style="left:6.5px;top:156.46px;width:157px;height:17.8px;display:flex;align-items:flex-start;overflow:hidden"><span style="white-space:pre;line-height:1;font-size:10.8px;color:#1a1a1a;margin-top:4px">Kód nadřízené akce</span><span style="flex:1;min-width:0;height:2px;margin:11.14px 0 0 7px;background:repeating-linear-gradient(to left,#222 0 1px,transparent 1px 7px)"></span></div>
<div style="left:178px;top:152px;width:91px;height:19px;background:#fff;border:1px solid #c4d5ef"></div>
<div style="left:251px;top:153px;width:17px;height:17px;background:#fff"></div>
<div style="left:254.5px;top:160.5px;width:2.5px;height:2.5px;background:#111"></div>
<div style="left:258.5px;top:160.5px;width:2.5px;height:2.5px;background:#111"></div>
<div style="left:262.5px;top:160.5px;width:2.5px;height:2.5px;background:#111"></div>
<div style="left:6.5px;top:180.46px;width:157px;height:17.8px;display:flex;align-items:flex-start;overflow:hidden"><span style="white-space:pre;line-height:1;font-size:10.8px;color:#1a1a1a;margin-top:4px">Název nadřízené akce</span><span style="flex:1;min-width:0;height:2px;margin:11.14px 0 0 7px;background:repeating-linear-gradient(to left,#222 0 1px,transparent 1px 7px)"></span></div>
<div style="left:178px;top:176px;width:91px;height:19px;background:#fff;border:1px solid #c4d5ef"></div>
<div style="left:251px;top:177px;width:17px;height:17px;background:#fff"></div>
<div style="left:254.5px;top:184.5px;width:2.5px;height:2.5px;background:#111"></div>
<div style="left:258.5px;top:184.5px;width:2.5px;height:2.5px;background:#111"></div>
<div style="left:262.5px;top:184.5px;width:2.5px;height:2.5px;background:#111"></div>
<div style="left:6.5px;top:205.46px;width:157px;height:17.8px;display:flex;align-items:flex-start;overflow:hidden"><span style="white-space:pre;line-height:1;font-size:10.8px;color:#1a1a1a;margin-top:4px">Kód sledované akce</span><span style="flex:1;min-width:0;height:2px;margin:11.14px 0 0 7px;background:repeating-linear-gradient(to left,#222 0 1px,transparent 1px 7px)"></span></div>
<div style="left:178px;top:201px;width:91px;height:19px;background:#dde8fa;border:1px solid #c4d5ef"></div>
<div style="left:6.5px;top:229.46px;width:157px;height:17.8px;display:flex;align-items:flex-start;overflow:hidden"><span style="white-space:pre;line-height:1;font-size:10.8px;color:#1a1a1a;margin-top:4px">Název sledované akce</span><span style="flex:1;min-width:0;height:2px;margin:11.14px 0 0 7px;background:repeating-linear-gradient(to left,#222 0 1px,transparent 1px 7px)"></span></div>
<div style="left:178px;top:225px;width:91px;height:19px;background:#dde8fa;border:1px solid #c4d5ef"></div>
<div style="left:6.5px;top:253.46px;width:157px;height:17.8px;display:flex;align-items:flex-start;overflow:hidden"><span style="white-space:pre;line-height:1;font-size:10.8px;color:#1a1a1a;margin-top:4px">Kód procesu</span><span style="flex:1;min-width:0;height:2px;margin:11.14px 0 0 7px;background:repeating-linear-gradient(to left,#222 0 1px,transparent 1px 7px)"></span></div>
<div style="left:178px;top:249px;width:91px;height:19px;background:#fff;border:1px solid #c4d5ef"></div>
<div style="left:251px;top:250px;width:17px;height:17px;background:#fff"></div>
<div style="left:254.5px;top:257.5px;width:2.5px;height:2.5px;background:#111"></div>
<div style="left:258.5px;top:257.5px;width:2.5px;height:2.5px;background:#111"></div>
<div style="left:262.5px;top:257.5px;width:2.5px;height:2.5px;background:#111"></div>
<div style="left:179px;top:250px;width:72px;height:17px;overflow:hidden;">
<div class="t" style="left:1px;top:3.14px;font-size:10.7px;color:#111;font-weight:400;">S-VYHADO</div>
</div>
<div style="left:6.5px;top:277.46px;width:157px;height:17.8px;display:flex;align-items:flex-start;overflow:hidden"><span style="white-space:pre;line-height:1;font-size:10.8px;color:#1a1a1a;margin-top:4px">Název procesu</span><span style="flex:1;min-width:0;height:2px;margin:11.14px 0 0 7px;background:repeating-linear-gradient(to left,#222 0 1px,transparent 1px 7px)"></span></div>
<div style="left:178px;top:273px;width:91px;height:19px;background:#fff;border:1px solid #c4d5ef"></div>
<div style="left:251px;top:274px;width:17px;height:17px;background:#fff"></div>
<div style="left:254.5px;top:281.5px;width:2.5px;height:2.5px;background:#111"></div>
<div style="left:258.5px;top:281.5px;width:2.5px;height:2.5px;background:#111"></div>
<div style="left:262.5px;top:281.5px;width:2.5px;height:2.5px;background:#111"></div>
<div style="left:179px;top:274px;width:72px;height:17px;overflow:hidden;">
<div class="t" style="left:1px;top:3.14px;font-size:10.7px;color:#111;font-weight:400;">Výměna hadiček</div>
</div>
<div style="left:6.5px;top:301.46px;width:157px;height:17.8px;display:flex;align-items:flex-start;overflow:hidden"><span style="white-space:pre;line-height:1;font-size:10.8px;color:#1a1a1a;margin-top:4px">Předpokládaná spotřeba času</span><span style="flex:1;min-width:0;height:2px;margin:11.14px 0 0 7px;background:repeating-linear-gradient(to left,#222 0 1px,transparent 1px 7px)"></span></div>
<div style="left:178px;top:297px;width:91px;height:19px;background:#fff;border:1px solid #c4d5ef"></div>
<div class="t" style="left:-333px;width:600px;text-align:right;top:301.14px;font-size:10.7px;color:#111;font-weight:400;">0,0833</div>
<div style="left:6.5px;top:325.46px;width:157px;height:17.8px;display:flex;align-items:flex-start;overflow:hidden"><span style="white-space:pre;line-height:1;font-size:10.8px;color:#1a1a1a;margin-top:4px">Skutečná spotřeba času</span><span style="flex:1;min-width:0;height:2px;margin:11.14px 0 0 7px;background:repeating-linear-gradient(to left,#222 0 1px,transparent 1px 7px)"></span></div>
<div style="left:178px;top:321px;width:91px;height:19px;background:#fff;border:1px solid #c4d5ef"></div>
<div style="left:6.5px;top:349.46px;width:157px;height:17.8px;display:flex;align-items:flex-start;overflow:hidden"><span style="white-space:pre;line-height:1;font-size:10.8px;color:#1a1a1a;margin-top:4px">Náklady plánované ostatní</span><span style="flex:1;min-width:0;height:2px;margin:11.14px 0 0 7px;background:repeating-linear-gradient(to left,#222 0 1px,transparent 1px 7px)"></span></div>
<div style="left:178px;top:345px;width:91px;height:19px;background:#fff;border:1px solid #c4d5ef"></div>
<div style="left:6.5px;top:373.46px;width:157px;height:17.8px;display:flex;align-items:flex-start;overflow:hidden"><span style="white-space:pre;line-height:1;font-size:10.8px;color:#1a1a1a;margin-top:4px">Náklady skutečné ostatní</span><span style="flex:1;min-width:0;height:2px;margin:11.14px 0 0 7px;background:repeating-linear-gradient(to left,#222 0 1px,transparent 1px 7px)"></span></div>
<div style="left:178px;top:369px;width:91px;height:19px;background:#fff;border:1px solid #c4d5ef"></div>
</div>
<div style="left:757px;top:581px;width:271px;height:384px;overflow:hidden;">
<div style="left:6.5px;top:12.46px;width:156px;height:17.8px;display:flex;align-items:flex-start;overflow:hidden"><span style="white-space:pre;line-height:1;font-size:10.8px;color:#1a1a1a;margin-top:4px">Identifikátor zařízení</span><span style="flex:1;min-width:0;height:2px;margin:11.14px 0 0 7px;background:repeating-linear-gradient(to left,#222 0 1px,transparent 1px 7px)"></span></div>
<div style="left:178px;top:8px;width:90px;height:19px;background:#fff;border:1px solid #c4d5ef"></div>
<div style="left:250px;top:9px;width:17px;height:17px;background:#fff"></div>
<div style="left:253.5px;top:16.5px;width:2.5px;height:2.5px;background:#111"></div>
<div style="left:257.5px;top:16.5px;width:2.5px;height:2.5px;background:#111"></div>
<div style="left:261.5px;top:16.5px;width:2.5px;height:2.5px;background:#111"></div>
<div style="left:179px;top:9px;width:71px;height:17px;overflow:hidden;">
<div class="t" style="left:1px;top:3.14px;font-size:10.7px;color:#111;font-weight:400;">S-ODVZ2</div>
</div>
<div style="left:6.5px;top:36.46px;width:156px;height:17.8px;display:flex;align-items:flex-start;overflow:hidden"><span style="white-space:pre;line-height:1;font-size:10.8px;color:#1a1a1a;margin-top:4px">Název zařízení</span><span style="flex:1;min-width:0;height:2px;margin:11.14px 0 0 7px;background:repeating-linear-gradient(to left,#222 0 1px,transparent 1px 7px)"></span></div>
<div style="left:178px;top:32px;width:90px;height:19px;background:#fff;border:1px solid #c4d5ef"></div>
<div style="left:250px;top:33px;width:17px;height:17px;background:#fff"></div>
<div style="left:253.5px;top:40.5px;width:2.5px;height:2.5px;background:#111"></div>
<div style="left:257.5px;top:40.5px;width:2.5px;height:2.5px;background:#111"></div>
<div style="left:261.5px;top:40.5px;width:2.5px;height:2.5px;background:#111"></div>
<div style="left:179px;top:33px;width:71px;height:17px;overflow:hidden;">
<div class="t" style="left:1px;top:3.14px;font-size:10.7px;color:#111;font-weight:400;">Odvzdušňovací sada</div>
</div>
<div style="left:6.5px;top:60.46px;width:156px;height:17.8px;display:flex;align-items:flex-start;overflow:hidden"><span style="white-space:pre;line-height:1;font-size:10.8px;color:#1a1a1a;margin-top:4px">Výrobní číslo</span><span style="flex:1;min-width:0;height:2px;margin:11.14px 0 0 7px;background:repeating-linear-gradient(to left,#222 0 1px,transparent 1px 7px)"></span></div>
<div style="left:178px;top:56px;width:90px;height:19px;background:#fff;border:1px solid #c4d5ef"></div>
<div style="left:250px;top:57px;width:17px;height:17px;background:#fff"></div>
<div style="left:253.5px;top:64.5px;width:2.5px;height:2.5px;background:#111"></div>
<div style="left:257.5px;top:64.5px;width:2.5px;height:2.5px;background:#111"></div>
<div style="left:261.5px;top:64.5px;width:2.5px;height:2.5px;background:#111"></div>
<div style="left:179px;top:57px;width:71px;height:17px;overflow:hidden;">
<div class="t" style="left:1px;top:3.14px;font-size:10.7px;color:#111;font-weight:400;">127878</div>
</div>
<div style="left:6.5px;top:84.46px;width:156px;height:17.8px;display:flex;align-items:flex-start;overflow:hidden"><span style="white-space:pre;line-height:1;font-size:10.8px;color:#1a1a1a;margin-top:4px">Evidenční číslo</span><span style="flex:1;min-width:0;height:2px;margin:11.14px 0 0 7px;background:repeating-linear-gradient(to left,#222 0 1px,transparent 1px 7px)"></span></div>
<div style="left:178px;top:80px;width:90px;height:19px;background:#fff;border:1px solid #c4d5ef"></div>
<div style="left:250px;top:81px;width:17px;height:17px;background:#fff"></div>
<div style="left:253.5px;top:88.5px;width:2.5px;height:2.5px;background:#111"></div>
<div style="left:257.5px;top:88.5px;width:2.5px;height:2.5px;background:#111"></div>
<div style="left:261.5px;top:88.5px;width:2.5px;height:2.5px;background:#111"></div>
<div style="left:6.5px;top:108.46px;width:156px;height:17.8px;display:flex;align-items:flex-start;overflow:hidden"><span style="white-space:pre;line-height:1;font-size:10.8px;color:#1a1a1a;margin-top:4px">Předepsaný stav (Nh)</span><span style="flex:1;min-width:0;height:2px;margin:11.14px 0 0 7px;background:repeating-linear-gradient(to left,#222 0 1px,transparent 1px 7px)"></span></div>
<div style="left:178px;top:104px;width:90px;height:19px;background:#dde8fa;border:1px solid #c4d5ef"></div>
<div class="t" style="left:-334px;width:600px;text-align:right;top:108.14px;font-size:10.7px;color:#111;font-weight:400;">16,67</div>
<div style="left:6.5px;top:132.46px;width:156px;height:17.8px;display:flex;align-items:flex-start;overflow:hidden"><span style="white-space:pre;line-height:1;font-size:10.8px;color:#1a1a1a;margin-top:4px">Předepsaný stav (cykly)</span><span style="flex:1;min-width:0;height:2px;margin:11.14px 0 0 7px;background:repeating-linear-gradient(to left,#222 0 1px,transparent 1px 7px)"></span></div>
<div style="left:178px;top:128px;width:90px;height:19px;background:#dde8fa;border:1px solid #c4d5ef"></div>
<div style="left:6.5px;top:156.46px;width:156px;height:17.8px;display:flex;align-items:flex-start;overflow:hidden"><span style="white-space:pre;line-height:1;font-size:10.8px;color:#1a1a1a;margin-top:4px">Typ odstávky</span><span style="flex:1;min-width:0;height:2px;margin:11.14px 0 0 7px;background:repeating-linear-gradient(to left,#222 0 1px,transparent 1px 7px)"></span></div>
<div style="left:178px;top:152px;width:90px;height:19px;background:#dde8fa;border:1px solid #c4d5ef"></div>
<div style="left:6.5px;top:180.46px;width:156px;height:17.8px;display:flex;align-items:flex-start;overflow:hidden"><span style="white-space:pre;line-height:1;font-size:10.8px;color:#1a1a1a;margin-top:4px">Název odstávky</span><span style="flex:1;min-width:0;height:2px;margin:11.14px 0 0 7px;background:repeating-linear-gradient(to left,#222 0 1px,transparent 1px 7px)"></span></div>
<div style="left:178px;top:176px;width:90px;height:19px;background:#dde8fa;border:1px solid #c4d5ef"></div>
<div style="left:6.5px;top:205.46px;width:156px;height:17.8px;display:flex;align-items:flex-start;overflow:hidden"><span style="white-space:pre;line-height:1;font-size:10.8px;color:#1a1a1a;margin-top:4px">Stav při ukončení akce (Nh)</span><span style="flex:1;min-width:0;height:2px;margin:11.14px 0 0 7px;background:repeating-linear-gradient(to left,#222 0 1px,transparent 1px 7px)"></span></div>
<div style="left:178px;top:201px;width:90px;height:19px;background:#fff;border:1px solid #c4d5ef"></div>
<div style="left:6.5px;top:229.46px;width:156px;height:17.8px;display:flex;align-items:flex-start;overflow:hidden"><span style="white-space:pre;line-height:1;font-size:10.8px;color:#1a1a1a;margin-top:4px">Stav při ukončení akce (cykly)</span><span style="flex:1;min-width:0;height:2px;margin:11.14px 0 0 7px;background:repeating-linear-gradient(to left,#222 0 1px,transparent 1px 7px)"></span></div>
<div style="left:178px;top:225px;width:90px;height:19px;background:#fff;border:1px solid #c4d5ef"></div>
<div style="left:6.5px;top:253.46px;width:156px;height:17.8px;display:flex;align-items:flex-start;overflow:hidden"><span style="white-space:pre;line-height:1;font-size:10.8px;color:#1a1a1a;margin-top:4px">Datum účetního ukončení</span><span style="flex:1;min-width:0;height:2px;margin:11.14px 0 0 7px;background:repeating-linear-gradient(to left,#222 0 1px,transparent 1px 7px)"></span></div>
<div style="left:178px;top:249px;width:90px;height:19px;background:#fff;border:1px solid #c4d5ef"></div>
<div style="left:250px;top:250px;width:17px;height:17px;background:#fff"></div>
<svg style="position:absolute;left:253px;top:255.0px;" width="10" height="8" viewBox="0 0 10 8"><path d="M1.5 2L5 5.5L8.5 2" fill="none" stroke="#111" stroke-width="2"/></svg>
<div style="left:6.5px;top:277.46px;width:156px;height:17.8px;display:flex;align-items:flex-start;overflow:hidden"><span style="white-space:pre;line-height:1;font-size:10.8px;color:#1a1a1a;margin-top:4px">Kalkulační jednice</span><span style="flex:1;min-width:0;height:2px;margin:11.14px 0 0 7px;background:repeating-linear-gradient(to left,#222 0 1px,transparent 1px 7px)"></span></div>
<div style="left:178px;top:273px;width:90px;height:19px;background:#dde8fa;border:1px solid #c4d5ef"></div>
<div style="left:6.5px;top:301.46px;width:156px;height:17.8px;display:flex;align-items:flex-start;overflow:hidden"><span style="white-space:pre;line-height:1;font-size:10.8px;color:#1a1a1a;margin-top:4px">Název kalkulační jednice</span><span style="flex:1;min-width:0;height:2px;margin:11.14px 0 0 7px;background:repeating-linear-gradient(to left,#222 0 1px,transparent 1px 7px)"></span></div>
<div style="left:178px;top:297px;width:90px;height:19px;background:#dde8fa;border:1px solid #c4d5ef"></div>
<div style="left:6.5px;top:325.46px;width:156px;height:17.8px;display:flex;align-items:flex-start;overflow:hidden"><span style="white-space:pre;line-height:1;font-size:10.8px;color:#1a1a1a;margin-top:4px">Hospodářské středisko</span><span style="flex:1;min-width:0;height:2px;margin:11.14px 0 0 7px;background:repeating-linear-gradient(to left,#222 0 1px,transparent 1px 7px)"></span></div>
<div style="left:178px;top:321px;width:90px;height:19px;background:#dde8fa;border:1px solid #c4d5ef"></div>
<div style="left:6.5px;top:349.46px;width:156px;height:17.8px;display:flex;align-items:flex-start;overflow:hidden"><span style="white-space:pre;line-height:1;font-size:10.8px;color:#1a1a1a;margin-top:4px">Název hospodářského střediska</span><span style="flex:1;min-width:0;height:2px;margin:11.14px 0 0 7px;background:repeating-linear-gradient(to left,#222 0 1px,transparent 1px 7px)"></span></div>
<div style="left:178px;top:345px;width:90px;height:19px;background:#dde8fa;border:1px solid #c4d5ef"></div>
<div style="left:6.5px;top:373.46px;width:156px;height:17.8px;display:flex;align-items:flex-start;overflow:hidden"><span style="white-space:pre;line-height:1;font-size:10.8px;color:#1a1a1a;margin-top:4px">Obor</span><span style="flex:1;min-width:0;height:2px;margin:11.14px 0 0 7px;background:repeating-linear-gradient(to left,#222 0 1px,transparent 1px 7px)"></span></div>
<div style="left:178px;top:369px;width:90px;height:19px;background:#dde8fa;border:1px solid #c4d5ef"></div>
</div>
<div style="left:723px;top:589px;width:17px;height:376px;background:#f3f7fb"></div>
<div style="left:723px;top:605px;width:17px;height:131px;background:#d6e5f2"></div>
<svg style="position:absolute;left:727px;top:593px;" width="9" height="7" viewBox="0 0 9 7"><path d="M1 6L4.5 2L8 6" fill="none" stroke="#111" stroke-width="2"/></svg>
<svg style="position:absolute;left:727px;top:952px;" width="9" height="7" viewBox="0 0 9 7"><path d="M1 1L4.5 5L8 1" fill="none" stroke="#111" stroke-width="2"/></svg>
<div style="left:1027px;top:589px;width:17px;height:376px;background:#f3f7fb"></div>
<div style="left:1027px;top:605px;width:17px;height:131px;background:#d6e5f2"></div>
<svg style="position:absolute;left:1031px;top:593px;" width="9" height="7" viewBox="0 0 9 7"><path d="M1 6L4.5 2L8 6" fill="none" stroke="#111" stroke-width="2"/></svg>
<svg style="position:absolute;left:1031px;top:952px;" width="9" height="7" viewBox="0 0 9 7"><path d="M1 1L4.5 5L8 1" fill="none" stroke="#111" stroke-width="2"/></svg>
<div style="left:1083px;top:468px;width:128px;height:22px;background:#4f87b7"></div>
<div class="t" style="left:1083px;width:128px;text-align:center;top:475.04px;font-size:10.7px;color:#fff;font-weight:400;">Dokumentace</div>
<svg style="position:absolute;left:1200px;top:474.0px;" width="6" height="10" viewBox="0 0 6 10"><polygon points="0.5,0.5 5.5,5 0.5,9.5" fill="#fff"/></svg>
<div style="left:1083px;top:496px;width:128px;height:22px;background:#4f87b7"></div>
<div class="t" style="left:1083px;width:128px;text-align:center;top:503.04px;font-size:10.7px;color:#fff;font-weight:400;">Obchodní partner</div>
<div style="left:1083px;top:524px;width:128px;height:22px;background:#4f87b7"></div>
<div class="t" style="left:1083px;width:128px;text-align:center;top:531.04px;font-size:10.7px;color:#fff;font-weight:400;">Účastníci</div>
<div style="left:1083px;top:552px;width:128px;height:22px;background:#4f87b7"></div>
<div class="t" style="left:1083px;width:128px;text-align:center;top:559.04px;font-size:10.7px;color:#fff;font-weight:400;">Hierarchie akcí</div>
<svg style="position:absolute;left:1200px;top:558.0px;" width="6" height="10" viewBox="0 0 6 10"><polygon points="0.5,0.5 5.5,5 0.5,9.5" fill="#fff"/></svg>
<div style="left:1083px;top:580px;width:128px;height:22px;background:#4f87b7"></div>
<div class="t" style="left:1083px;width:128px;text-align:center;top:587.04px;font-size:10.7px;color:#fff;font-weight:400;">Doklady</div>
<svg style="position:absolute;left:1200px;top:586.0px;" width="6" height="10" viewBox="0 0 6 10"><polygon points="0.5,0.5 5.5,5 0.5,9.5" fill="#fff"/></svg>
<div style="left:1083px;top:608px;width:128px;height:22px;background:#4f87b7"></div>
<div class="t" style="left:1083px;width:128px;text-align:center;top:615.04px;font-size:10.7px;color:#fff;font-weight:400;">Vyhodnocení akce</div>
<svg style="position:absolute;left:1200px;top:614.0px;" width="6" height="10" viewBox="0 0 6 10"><polygon points="0.5,0.5 5.5,5 0.5,9.5" fill="#fff"/></svg>
<div style="left:1083px;top:636px;width:128px;height:22px;background:#4f87b7"></div>
<div class="t" style="left:1083px;width:128px;text-align:center;top:643.04px;font-size:10.7px;color:#fff;font-weight:400;">Požadavky na zdroje</div>
<svg style="position:absolute;left:1200px;top:642.0px;" width="6" height="10" viewBox="0 0 6 10"><polygon points="0.5,0.5 5.5,5 0.5,9.5" fill="#fff"/></svg>
<div style="left:1083px;top:664px;width:128px;height:22px;background:#4f87b7"></div>
<div class="t" style="left:1083px;width:128px;text-align:center;top:671.04px;font-size:10.7px;color:#fff;font-weight:400;">Potřebné statky</div>
<svg style="position:absolute;left:1200px;top:670.0px;" width="6" height="10" viewBox="0 0 6 10"><polygon points="0.5,0.5 5.5,5 0.5,9.5" fill="#fff"/></svg>
<div style="left:1083px;top:692px;width:128px;height:22px;background:#4f87b7"></div>
<div class="t" style="left:1083px;width:128px;text-align:center;top:699.04px;font-size:10.7px;color:#fff;font-weight:400;">Výkazy činností</div>
<svg style="position:absolute;left:1200px;top:698.0px;" width="6" height="10" viewBox="0 0 6 10"><polygon points="0.5,0.5 5.5,5 0.5,9.5" fill="#fff"/></svg>
<div style="left:1083px;top:720px;width:128px;height:22px;background:#4f87b7"></div>
<div class="t" style="left:1083px;width:128px;text-align:center;top:727.04px;font-size:10.7px;color:#fff;font-weight:400;">Řešené položky</div>
<div style="left:1083px;top:748px;width:128px;height:22px;background:#4f87b7"></div>
<div class="t" style="left:1083px;width:128px;text-align:center;top:755.04px;font-size:10.7px;color:#fff;font-weight:400;">Zobrazení smlouvy</div>
<div style="left:1083px;top:776px;width:128px;height:22px;background:#4f87b7"></div>
<div class="t" style="left:1083px;width:128px;text-align:center;top:783.04px;font-size:10.7px;color:#fff;font-weight:400;">Detaily údajů</div>
<svg style="position:absolute;left:1200px;top:782.0px;" width="6" height="10" viewBox="0 0 6 10"><polygon points="0.5,0.5 5.5,5 0.5,9.5" fill="#fff"/></svg>
<div style="left:1083px;top:804px;width:128px;height:22px;background:#4f87b7"></div>
<div class="t" style="left:1083px;width:128px;text-align:center;top:811.04px;font-size:10.7px;color:#fff;font-weight:400;">Odstávky</div>
<div style="left:1083px;top:832px;width:128px;height:22px;background:#4f87b7"></div>
<div class="t" style="left:1083px;width:128px;text-align:center;top:839.04px;font-size:10.7px;color:#fff;font-weight:400;">Přeplánování zásahů</div>
<div style="left:1083px;top:860px;width:128px;height:22px;background:#4f87b7"></div>
<div class="t" style="left:1083px;width:128px;text-align:center;top:867.04px;font-size:10.7px;color:#fff;font-weight:400;">Výměna zařízení</div>
<div style="left:1083px;top:888px;width:128px;height:22px;background:#4f87b7"></div>
<div class="t" style="left:1083px;width:128px;text-align:center;top:895.04px;font-size:10.7px;color:#fff;font-weight:400;">Změna typu akce</div>
<div style="left:1083px;top:971px;width:128px;height:22px;background:#4f87b7"></div>
<div class="t" style="left:1083px;width:128px;text-align:center;top:978.04px;font-size:10.7px;color:#fff;font-weight:400;">Tisk</div>
</body></html>
